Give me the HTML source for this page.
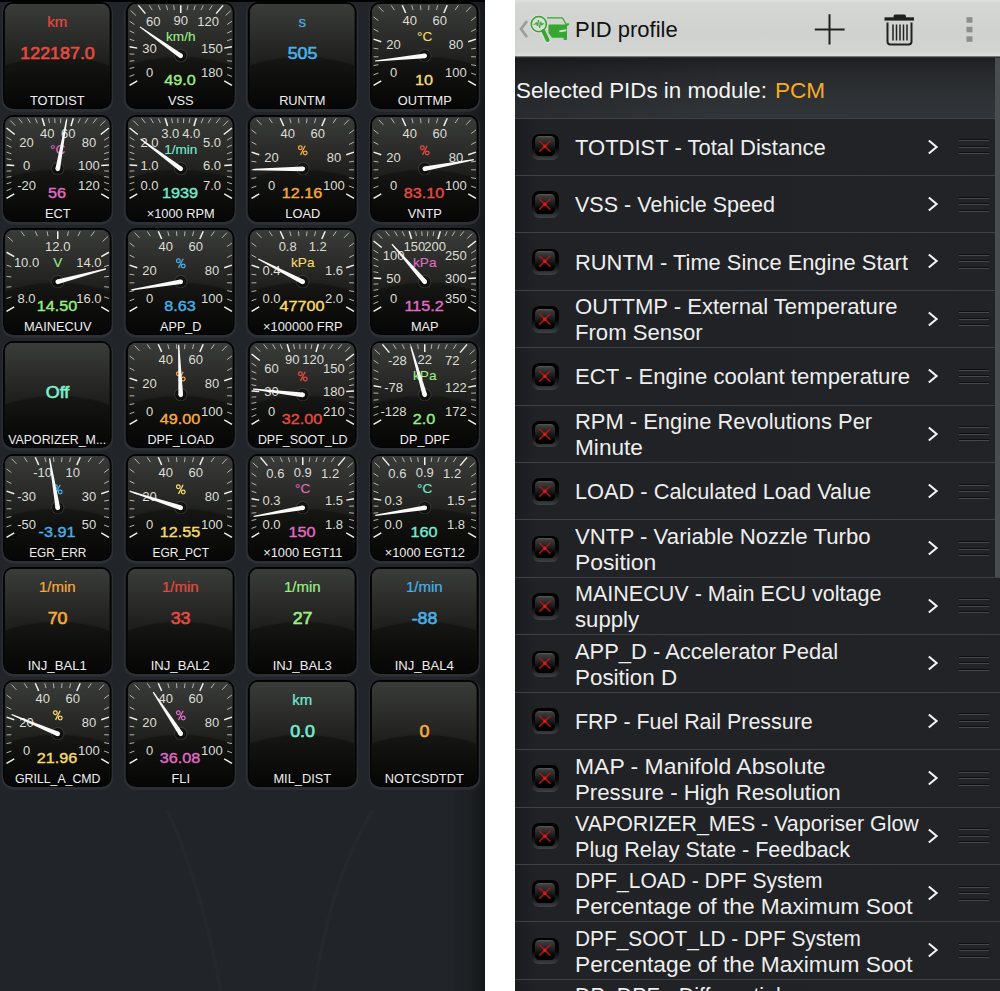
<!DOCTYPE html><html><head><meta charset="utf-8"><style>
*{margin:0;padding:0;box-sizing:border-box}
html,body{width:1000px;height:991px;overflow:hidden;background:#fff;font-family:"Liberation Sans",sans-serif}
#L{position:absolute;left:0;top:0;width:485px;height:991px;background:#212428;overflow:hidden}
#L .topbar{position:absolute;left:0;top:0;width:485px;height:1.5px;background:#000}
#L .rstrip{position:absolute;left:452px;top:0;width:33px;height:991px;background:linear-gradient(90deg,rgba(0,0,0,0) 0,rgba(0,0,0,0.1) 45%,rgba(0,0,0,0.28) 85%,rgba(0,0,0,0.4) 100%)}
#L .wm{position:absolute;left:0;top:790px}
.bx{position:absolute;width:108.5px;height:107px}
.bx svg{display:block;overflow:visible;font-family:"Liberation Sans",sans-serif}
.bx::before{content:"";position:absolute;left:-0.5px;top:-0.5px;right:-0.5px;bottom:-0.5px;border-radius:10.5px;box-shadow:0 1.5px 0 1.2px #2c3035}
#R{position:absolute;left:515px;top:0;width:485px;height:991px;background:#1f2124;overflow:hidden}
#hdr{position:absolute;left:0;top:0;width:485px;height:58px;background:linear-gradient(#dfe1de 0,#d5d7d4 6%,#d0d2cf 55%,#d2d4d1 88%,#dcdedb 96.8%,#55575a 97.6%,#2e3033 99%,#222427 100%)}
#hdr .ttl{position:absolute;left:60px;top:17.3px;font-size:22px;color:#111;line-height:26px}
#sel{position:absolute;left:0;top:58px;width:485px;height:60px;background:linear-gradient(90deg,rgba(0,0,0,0.18),rgba(0,0,0,0) 45%),linear-gradient(#1d1f22 0,#27292c 25%,#2f3235 70%,#323539 100%)}
#sel .st{position:absolute;left:0.5px;top:19.6px;font-size:22px;color:#f4f4f4;line-height:26px;white-space:nowrap}
#sel .pcm{color:#f8ab27}
.row{position:absolute;left:0;width:485px;height:57.42px;border-top:1px solid #3f4245;background:linear-gradient(90deg,#1a1c1f 0,#202225 22px,#212326 100%)}
.cb{position:absolute;left:16.5px;top:15.3px;width:27.5px;height:26.5px;border-radius:7px;background:linear-gradient(#000 0,#050505 50%,#222427 78%,#3e4145 100%)}
.cbi{position:absolute;left:3.5px;top:2.7px;width:20px;height:20px;border-radius:4.5px;background:linear-gradient(#5c5c5c 0,#3c3c3c 9%,#1c1c1c 50%,#020202 78%,#000 100%)}
.cbi svg{position:absolute;left:0;top:0}
.t1{position:absolute;left:60px;top:16.2px;font-size:22px;line-height:26px;color:#eeeeee;white-space:nowrap}
.t2{position:absolute;left:60px;top:3.5px;font-size:22px;line-height:26px;color:#eeeeee;white-space:nowrap}
.chev{position:absolute;left:412px;top:20px}
.drag{position:absolute;left:444px;top:20.6px;width:30px;height:16px}
.drag i{position:absolute;left:0;width:30px;height:2px;border-top:1px solid #0e0f10;border-bottom:1px solid #45484b}
.ln{display:inline-block;transform-origin:0 0}
#scr{position:absolute;left:480px;top:58px;width:5px;height:519px;background:#4a4d50}
</style></head><body>
<div id="L"><div class="topbar"></div><div class="rstrip"></div><svg class="wm" width="485" height="201" viewBox="0 0 485 201"><path d="M167 20Q200 90 221 201M373 20Q330 90 314 201" stroke="rgba(255,255,255,0.014)" stroke-width="4" fill="none"/></svg>
<svg width="0" height="0" style="position:absolute"><defs>
<linearGradient id="gbg" x1="0" y1="0" x2="0" y2="1"><stop offset="0" stop-color="#3a3c39"/><stop offset="0.3" stop-color="#2c2d2b"/><stop offset="0.55" stop-color="#1f201e"/><stop offset="1" stop-color="#141513"/></linearGradient>
<linearGradient id="gbot" x1="0" y1="0" x2="0" y2="1"><stop offset="0" stop-color="#161715"/><stop offset="0.35" stop-color="#0d0d0c"/><stop offset="0.7" stop-color="#050505"/><stop offset="1" stop-color="#020202"/></linearGradient>
<radialGradient id="hub" cx="0.5" cy="0.5" r="0.5"><stop offset="0" stop-color="#000"/><stop offset="0.6" stop-color="#0a0a0a"/><stop offset="1" stop-color="#222" stop-opacity="0"/></radialGradient>
<filter id="hblur" x="-10%" y="-10%" width="120%" height="120%"><feGaussianBlur stdDeviation="1.2"/></filter><clipPath id="gclip"><rect x="1.7" y="1.7" width="105.10" height="103.60" rx="8.5"/></clipPath>
</defs></svg><div class="bx" style="left:3.40px;top:1.50px"><svg width="108.50" height="107.00" viewBox="0 0 108.50 107.00"><rect x="0" y="0" width="108.50" height="107.00" rx="10" fill="#030303"/><g clip-path="url(#gclip)"><rect x="1.7" y="1.7" width="105.10" height="103.60" fill="url(#gbg)"/><ellipse cx="54.25" cy="93.00" rx="83" ry="39" fill="#1a1b19" opacity="0.5"/><ellipse cx="54.25" cy="93.00" rx="82" ry="38" fill="url(#gbot)"/></g><text x="54.25" y="24.9" font-size="15" fill="#e84a40" stroke="#e84a40" stroke-width="0.2" text-anchor="middle">km</text><text transform="translate(54.55 57.4) scale(1.05 1)" font-size="17" fill="#e84a40" stroke="#e84a40" stroke-width="0.6" text-anchor="middle">122187.0</text><text x="54.25" y="103" font-size="13" fill="#eee" text-anchor="middle" textLength="54.53" lengthAdjust="spacingAndGlyphs">TOTDIST</text></svg></div><div class="bx" style="left:125.60px;top:1.50px"><svg width="108.50" height="107.00" viewBox="0 0 108.50 107.00"><rect x="0" y="0" width="108.50" height="107.00" rx="10" fill="#030303"/><g clip-path="url(#gclip)"><rect x="1.7" y="1.7" width="105.10" height="103.60" fill="url(#gbg)"/><ellipse cx="54.25" cy="93.00" rx="83" ry="39" fill="#1a1b19" opacity="0.5"/><ellipse cx="54.25" cy="93.00" rx="82" ry="38" fill="url(#gbot)"/></g><line x1="3.55" y1="83.36" x2="11.25" y2="78.91" stroke="#f2f2f2" stroke-width="1.5"/><line x1="3.55" y1="74.49" x2="8.35" y2="72.55" stroke="#b4b4b4" stroke-width="1.0"/><line x1="3.55" y1="66.57" x2="8.35" y2="65.37" stroke="#b4b4b4" stroke-width="1.0"/><line x1="3.55" y1="59.18" x2="8.35" y2="58.68" stroke="#b4b4b4" stroke-width="1.0"/><line x1="3.55" y1="52.01" x2="8.35" y2="52.18" stroke="#b4b4b4" stroke-width="1.0"/><line x1="3.55" y1="44.77" x2="11.25" y2="46.13" stroke="#f2f2f2" stroke-width="1.5"/><line x1="3.55" y1="37.16" x2="8.35" y2="38.72" stroke="#b4b4b4" stroke-width="1.0"/><line x1="3.55" y1="28.83" x2="8.35" y2="31.17" stroke="#b4b4b4" stroke-width="1.0"/><line x1="3.55" y1="19.27" x2="8.35" y2="22.50" stroke="#b4b4b4" stroke-width="1.0"/><line x1="4.67" y1="8.71" x2="9.92" y2="13.44" stroke="#b4b4b4" stroke-width="1.0"/><line x1="12.43" y1="3.36" x2="19.38" y2="11.64" stroke="#f2f2f2" stroke-width="1.5"/><line x1="23.19" y1="3.30" x2="26.19" y2="8.10" stroke="#b4b4b4" stroke-width="1.0"/><line x1="32.27" y1="3.30" x2="34.40" y2="8.10" stroke="#b4b4b4" stroke-width="1.0"/><line x1="40.27" y1="3.30" x2="41.65" y2="8.10" stroke="#b4b4b4" stroke-width="1.0"/><line x1="47.65" y1="3.30" x2="48.33" y2="8.10" stroke="#b4b4b4" stroke-width="1.0"/><line x1="54.75" y1="3.30" x2="54.75" y2="11.00" stroke="#f2f2f2" stroke-width="1.5"/><line x1="61.85" y1="3.30" x2="61.17" y2="8.10" stroke="#b4b4b4" stroke-width="1.0"/><line x1="69.23" y1="3.30" x2="67.85" y2="8.10" stroke="#b4b4b4" stroke-width="1.0"/><line x1="77.23" y1="3.30" x2="75.10" y2="8.10" stroke="#b4b4b4" stroke-width="1.0"/><line x1="86.31" y1="3.30" x2="83.31" y2="8.10" stroke="#b4b4b4" stroke-width="1.0"/><line x1="97.07" y1="3.36" x2="90.12" y2="11.64" stroke="#f2f2f2" stroke-width="1.5"/><line x1="104.83" y1="8.71" x2="99.58" y2="13.44" stroke="#b4b4b4" stroke-width="1.0"/><line x1="105.95" y1="19.27" x2="101.15" y2="22.50" stroke="#b4b4b4" stroke-width="1.0"/><line x1="105.95" y1="28.83" x2="101.15" y2="31.17" stroke="#b4b4b4" stroke-width="1.0"/><line x1="105.95" y1="37.16" x2="101.15" y2="38.72" stroke="#b4b4b4" stroke-width="1.0"/><line x1="105.95" y1="44.77" x2="98.25" y2="46.13" stroke="#f2f2f2" stroke-width="1.5"/><line x1="105.95" y1="52.01" x2="101.15" y2="52.18" stroke="#b4b4b4" stroke-width="1.0"/><line x1="105.95" y1="59.18" x2="101.15" y2="58.68" stroke="#b4b4b4" stroke-width="1.0"/><line x1="105.95" y1="66.57" x2="101.15" y2="65.37" stroke="#b4b4b4" stroke-width="1.0"/><line x1="105.95" y1="74.49" x2="101.15" y2="72.55" stroke="#b4b4b4" stroke-width="1.0"/><line x1="105.95" y1="83.36" x2="98.25" y2="78.91" stroke="#f2f2f2" stroke-width="1.5"/><text x="23.55" y="74.86" font-size="13" fill="#deded6" text-anchor="middle">0</text><text x="23.55" y="51.35" font-size="13" fill="#deded6" text-anchor="middle">30</text><text x="27.35" y="24.19" font-size="13" fill="#deded6" text-anchor="middle">60</text><text x="54.75" y="23.00" font-size="13" fill="#deded6" text-anchor="middle">90</text><text x="82.15" y="24.19" font-size="13" fill="#deded6" text-anchor="middle">120</text><text x="85.95" y="51.35" font-size="13" fill="#deded6" text-anchor="middle">150</text><text x="85.95" y="74.86" font-size="13" fill="#deded6" text-anchor="middle">180</text><text x="54.75" y="39.4" font-size="13.6" fill="#9cee84" stroke="#9cee84" stroke-width="0.1" text-anchor="middle">km/h</text><text transform="translate(54.05 83.4) scale(1.08 1)" font-size="15" fill="#9cee84" stroke="#9cee84" stroke-width="0.38" text-anchor="middle">49.0</text><text x="54.75" y="103" font-size="13" fill="#eee" text-anchor="middle" textLength="25.63" lengthAdjust="spacingAndGlyphs">VSS</text><circle cx="54.75" cy="53.40" r="6.7" fill="#363736"/><circle cx="54.75" cy="53.80" r="5.7" fill="#0c0c0c"/><circle cx="54.75" cy="53.60" r="4.4" fill="#1e1f1e"/><circle cx="54.75" cy="54.10" r="3.5" fill="#070707"/><polygon points="56.11,51.88 14.31,24.39 13.61,25.37 53.39,55.72" fill="#fafafa"/><circle cx="54.75" cy="53.80" r="2.35" fill="#fafafa"/></svg></div><div class="bx" style="left:247.80px;top:1.50px"><svg width="108.50" height="107.00" viewBox="0 0 108.50 107.00"><rect x="0" y="0" width="108.50" height="107.00" rx="10" fill="#030303"/><g clip-path="url(#gclip)"><rect x="1.7" y="1.7" width="105.10" height="103.60" fill="url(#gbg)"/><ellipse cx="54.25" cy="93.00" rx="83" ry="39" fill="#1a1b19" opacity="0.5"/><ellipse cx="54.25" cy="93.00" rx="82" ry="38" fill="url(#gbot)"/></g><text x="54.25" y="24.9" font-size="15" fill="#4ab0e8" stroke="#4ab0e8" stroke-width="0.2" text-anchor="middle">s</text><text transform="translate(54.55 57.4) scale(1.05 1)" font-size="17" fill="#4ab0e8" stroke="#4ab0e8" stroke-width="0.6" text-anchor="middle">505</text><text x="54.25" y="103" font-size="13" fill="#eee" text-anchor="middle" textLength="46.23" lengthAdjust="spacingAndGlyphs">RUNTM</text></svg></div><div class="bx" style="left:370.00px;top:1.50px"><svg width="108.50" height="107.00" viewBox="0 0 108.50 107.00"><rect x="0" y="0" width="108.50" height="107.00" rx="10" fill="#030303"/><g clip-path="url(#gclip)"><rect x="1.7" y="1.7" width="105.10" height="103.60" fill="url(#gbg)"/><ellipse cx="54.25" cy="93.00" rx="83" ry="39" fill="#1a1b19" opacity="0.5"/><ellipse cx="54.25" cy="93.00" rx="82" ry="38" fill="url(#gbot)"/></g><line x1="3.55" y1="83.36" x2="11.25" y2="78.91" stroke="#f2f2f2" stroke-width="1.5"/><line x1="3.55" y1="72.84" x2="8.35" y2="71.06" stroke="#b4b4b4" stroke-width="1.0"/><line x1="3.55" y1="63.57" x2="8.35" y2="62.65" stroke="#b4b4b4" stroke-width="1.0"/><line x1="3.55" y1="54.87" x2="8.35" y2="54.77" stroke="#b4b4b4" stroke-width="1.0"/><line x1="3.55" y1="46.24" x2="8.35" y2="46.95" stroke="#b4b4b4" stroke-width="1.0"/><line x1="3.55" y1="37.16" x2="11.25" y2="39.67" stroke="#f2f2f2" stroke-width="1.5"/><line x1="3.55" y1="27.03" x2="8.35" y2="29.54" stroke="#b4b4b4" stroke-width="1.0"/><line x1="3.55" y1="14.94" x2="8.36" y2="18.59" stroke="#b4b4b4" stroke-width="1.0"/><line x1="8.57" y1="4.63" x2="13.45" y2="9.82" stroke="#b4b4b4" stroke-width="1.0"/><line x1="21.20" y1="3.30" x2="24.39" y2="8.10" stroke="#b4b4b4" stroke-width="1.0"/><line x1="32.27" y1="3.30" x2="35.69" y2="11.00" stroke="#f2f2f2" stroke-width="1.5"/><line x1="41.78" y1="3.30" x2="43.02" y2="8.10" stroke="#b4b4b4" stroke-width="1.0"/><line x1="50.51" y1="3.30" x2="50.91" y2="8.10" stroke="#b4b4b4" stroke-width="1.0"/><line x1="58.99" y1="3.30" x2="58.59" y2="8.10" stroke="#b4b4b4" stroke-width="1.0"/><line x1="67.72" y1="3.30" x2="66.48" y2="8.10" stroke="#b4b4b4" stroke-width="1.0"/><line x1="77.23" y1="3.30" x2="73.81" y2="11.00" stroke="#f2f2f2" stroke-width="1.5"/><line x1="88.30" y1="3.30" x2="85.11" y2="8.10" stroke="#b4b4b4" stroke-width="1.0"/><line x1="100.93" y1="4.63" x2="96.05" y2="9.82" stroke="#b4b4b4" stroke-width="1.0"/><line x1="105.95" y1="14.94" x2="101.14" y2="18.59" stroke="#b4b4b4" stroke-width="1.0"/><line x1="105.95" y1="27.03" x2="101.15" y2="29.54" stroke="#b4b4b4" stroke-width="1.0"/><line x1="105.95" y1="37.16" x2="98.25" y2="39.67" stroke="#f2f2f2" stroke-width="1.5"/><line x1="105.95" y1="46.24" x2="101.15" y2="46.95" stroke="#b4b4b4" stroke-width="1.0"/><line x1="105.95" y1="54.87" x2="101.15" y2="54.77" stroke="#b4b4b4" stroke-width="1.0"/><line x1="105.95" y1="63.57" x2="101.15" y2="62.65" stroke="#b4b4b4" stroke-width="1.0"/><line x1="105.95" y1="72.84" x2="101.15" y2="71.06" stroke="#b4b4b4" stroke-width="1.0"/><line x1="105.95" y1="83.36" x2="98.25" y2="78.91" stroke="#f2f2f2" stroke-width="1.5"/><text x="23.55" y="74.86" font-size="13" fill="#deded6" text-anchor="middle">0</text><text x="23.55" y="46.71" font-size="13" fill="#deded6" text-anchor="middle">20</text><text x="39.68" y="23.00" font-size="13" fill="#deded6" text-anchor="middle">40</text><text x="69.82" y="23.00" font-size="13" fill="#deded6" text-anchor="middle">60</text><text x="85.95" y="46.71" font-size="13" fill="#deded6" text-anchor="middle">80</text><text x="85.95" y="74.86" font-size="13" fill="#deded6" text-anchor="middle">100</text><text x="54.75" y="39.4" font-size="13.6" fill="#f8dc6c" stroke="#f8dc6c" stroke-width="0.1" text-anchor="middle">°C</text><text transform="translate(54.05 83.4) scale(1.08 1)" font-size="15" fill="#f8dc6c" stroke="#f8dc6c" stroke-width="0.38" text-anchor="middle">10</text><text x="54.75" y="103" font-size="13" fill="#eee" text-anchor="middle" textLength="54.05" lengthAdjust="spacingAndGlyphs">OUTTMP</text><circle cx="54.75" cy="53.40" r="6.7" fill="#363736"/><circle cx="54.75" cy="53.80" r="5.7" fill="#0c0c0c"/><circle cx="54.75" cy="53.60" r="4.4" fill="#1e1f1e"/><circle cx="54.75" cy="54.10" r="3.5" fill="#070707"/><polygon points="54.50,51.46 4.96,58.43 5.09,59.62 55.00,56.14" fill="#fafafa"/><circle cx="54.75" cy="53.80" r="2.35" fill="#fafafa"/></svg></div><div class="bx" style="left:3.40px;top:114.58px"><svg width="108.50" height="107.00" viewBox="0 0 108.50 107.00"><rect x="0" y="0" width="108.50" height="107.00" rx="10" fill="#030303"/><g clip-path="url(#gclip)"><rect x="1.7" y="1.7" width="105.10" height="103.60" fill="url(#gbg)"/><ellipse cx="54.25" cy="93.00" rx="83" ry="39" fill="#1a1b19" opacity="0.5"/><ellipse cx="54.25" cy="93.00" rx="82" ry="38" fill="url(#gbot)"/></g><line x1="3.55" y1="83.36" x2="11.25" y2="78.91" stroke="#f2f2f2" stroke-width="1.5"/><line x1="3.55" y1="75.68" x2="8.35" y2="73.63" stroke="#b4b4b4" stroke-width="1.0"/><line x1="3.55" y1="68.76" x2="8.35" y2="67.36" stroke="#b4b4b4" stroke-width="1.0"/><line x1="3.55" y1="62.30" x2="8.35" y2="61.51" stroke="#b4b4b4" stroke-width="1.0"/><line x1="3.55" y1="56.10" x2="8.35" y2="55.88" stroke="#b4b4b4" stroke-width="1.0"/><line x1="3.55" y1="49.96" x2="11.25" y2="50.54" stroke="#f2f2f2" stroke-width="1.5"/><line x1="3.55" y1="43.72" x2="8.35" y2="44.66" stroke="#b4b4b4" stroke-width="1.0"/><line x1="3.55" y1="37.16" x2="8.35" y2="38.72" stroke="#b4b4b4" stroke-width="1.0"/><line x1="3.55" y1="30.08" x2="8.35" y2="32.30" stroke="#b4b4b4" stroke-width="1.0"/><line x1="3.55" y1="22.16" x2="8.35" y2="25.13" stroke="#b4b4b4" stroke-width="1.0"/><line x1="3.56" y1="12.97" x2="11.77" y2="19.52" stroke="#f2f2f2" stroke-width="1.5"/><line x1="7.22" y1="5.56" x2="12.27" y2="10.68" stroke="#b4b4b4" stroke-width="1.0"/><line x1="15.70" y1="3.30" x2="19.41" y2="8.10" stroke="#b4b4b4" stroke-width="1.0"/><line x1="24.58" y1="3.30" x2="27.45" y2="8.10" stroke="#b4b4b4" stroke-width="1.0"/><line x1="32.27" y1="3.30" x2="34.40" y2="8.10" stroke="#b4b4b4" stroke-width="1.0"/><line x1="39.17" y1="3.30" x2="41.55" y2="11.00" stroke="#f2f2f2" stroke-width="1.5"/><line x1="45.59" y1="3.30" x2="46.46" y2="8.10" stroke="#b4b4b4" stroke-width="1.0"/><line x1="51.72" y1="3.30" x2="52.01" y2="8.10" stroke="#b4b4b4" stroke-width="1.0"/><line x1="57.78" y1="3.30" x2="57.49" y2="8.10" stroke="#b4b4b4" stroke-width="1.0"/><line x1="63.91" y1="3.30" x2="63.04" y2="8.10" stroke="#b4b4b4" stroke-width="1.0"/><line x1="70.33" y1="3.30" x2="67.95" y2="11.00" stroke="#f2f2f2" stroke-width="1.5"/><line x1="77.23" y1="3.30" x2="75.10" y2="8.10" stroke="#b4b4b4" stroke-width="1.0"/><line x1="84.92" y1="3.30" x2="82.05" y2="8.10" stroke="#b4b4b4" stroke-width="1.0"/><line x1="93.80" y1="3.30" x2="90.09" y2="8.10" stroke="#b4b4b4" stroke-width="1.0"/><line x1="102.28" y1="5.56" x2="97.23" y2="10.68" stroke="#b4b4b4" stroke-width="1.0"/><line x1="105.94" y1="12.97" x2="97.73" y2="19.52" stroke="#f2f2f2" stroke-width="1.5"/><line x1="105.95" y1="22.16" x2="101.15" y2="25.13" stroke="#b4b4b4" stroke-width="1.0"/><line x1="105.95" y1="30.08" x2="101.15" y2="32.30" stroke="#b4b4b4" stroke-width="1.0"/><line x1="105.95" y1="37.16" x2="101.15" y2="38.72" stroke="#b4b4b4" stroke-width="1.0"/><line x1="105.95" y1="43.72" x2="101.15" y2="44.66" stroke="#b4b4b4" stroke-width="1.0"/><line x1="105.95" y1="49.96" x2="98.25" y2="50.54" stroke="#f2f2f2" stroke-width="1.5"/><line x1="105.95" y1="56.10" x2="101.15" y2="55.88" stroke="#b4b4b4" stroke-width="1.0"/><line x1="105.95" y1="62.30" x2="101.15" y2="61.51" stroke="#b4b4b4" stroke-width="1.0"/><line x1="105.95" y1="68.76" x2="101.15" y2="67.36" stroke="#b4b4b4" stroke-width="1.0"/><line x1="105.95" y1="75.68" x2="101.15" y2="73.63" stroke="#b4b4b4" stroke-width="1.0"/><line x1="105.95" y1="83.36" x2="98.25" y2="78.91" stroke="#f2f2f2" stroke-width="1.5"/><text x="23.55" y="74.86" font-size="13" fill="#deded6" text-anchor="middle">-20</text><text x="23.55" y="54.51" font-size="13" fill="#deded6" text-anchor="middle">0</text><text x="23.55" y="31.97" font-size="13" fill="#deded6" text-anchor="middle">20</text><text x="44.31" y="23.00" font-size="13" fill="#deded6" text-anchor="middle">40</text><text x="65.19" y="23.00" font-size="13" fill="#deded6" text-anchor="middle">60</text><text x="85.95" y="31.97" font-size="13" fill="#deded6" text-anchor="middle">80</text><text x="85.95" y="54.51" font-size="13" fill="#deded6" text-anchor="middle">100</text><text x="85.95" y="74.86" font-size="13" fill="#deded6" text-anchor="middle">120</text><text x="54.75" y="39.4" font-size="13.6" fill="#e06cc4" stroke="#e06cc4" stroke-width="0.1" text-anchor="middle">°C</text><text transform="translate(54.05 83.4) scale(1.08 1)" font-size="15" fill="#e06cc4" stroke="#e06cc4" stroke-width="0.38" text-anchor="middle">56</text><text x="54.75" y="103" font-size="13" fill="#eee" text-anchor="middle" textLength="25.61" lengthAdjust="spacingAndGlyphs">ECT</text><circle cx="54.75" cy="53.40" r="6.7" fill="#363736"/><circle cx="54.75" cy="53.80" r="5.7" fill="#0c0c0c"/><circle cx="54.75" cy="53.60" r="4.4" fill="#1e1f1e"/><circle cx="54.75" cy="54.10" r="3.5" fill="#070707"/><polygon points="57.06,54.22 64.27,4.71 63.09,4.50 52.44,53.38" fill="#fafafa"/><circle cx="54.75" cy="53.80" r="2.35" fill="#fafafa"/></svg></div><div class="bx" style="left:125.60px;top:114.58px"><svg width="108.50" height="107.00" viewBox="0 0 108.50 107.00"><rect x="0" y="0" width="108.50" height="107.00" rx="10" fill="#030303"/><g clip-path="url(#gclip)"><rect x="1.7" y="1.7" width="105.10" height="103.60" fill="url(#gbg)"/><ellipse cx="54.25" cy="93.00" rx="83" ry="39" fill="#1a1b19" opacity="0.5"/><ellipse cx="54.25" cy="93.00" rx="82" ry="38" fill="url(#gbot)"/></g><line x1="3.55" y1="83.36" x2="11.25" y2="78.91" stroke="#f2f2f2" stroke-width="1.5"/><line x1="3.55" y1="75.68" x2="8.35" y2="73.63" stroke="#b4b4b4" stroke-width="1.0"/><line x1="3.55" y1="68.76" x2="8.35" y2="67.36" stroke="#b4b4b4" stroke-width="1.0"/><line x1="3.55" y1="62.30" x2="8.35" y2="61.51" stroke="#b4b4b4" stroke-width="1.0"/><line x1="3.55" y1="56.10" x2="8.35" y2="55.88" stroke="#b4b4b4" stroke-width="1.0"/><line x1="3.55" y1="49.96" x2="11.25" y2="50.54" stroke="#f2f2f2" stroke-width="1.5"/><line x1="3.55" y1="43.72" x2="8.35" y2="44.66" stroke="#b4b4b4" stroke-width="1.0"/><line x1="3.55" y1="37.16" x2="8.35" y2="38.72" stroke="#b4b4b4" stroke-width="1.0"/><line x1="3.55" y1="30.08" x2="8.35" y2="32.30" stroke="#b4b4b4" stroke-width="1.0"/><line x1="3.55" y1="22.16" x2="8.35" y2="25.13" stroke="#b4b4b4" stroke-width="1.0"/><line x1="3.56" y1="12.97" x2="11.77" y2="19.52" stroke="#f2f2f2" stroke-width="1.5"/><line x1="7.22" y1="5.56" x2="12.27" y2="10.68" stroke="#b4b4b4" stroke-width="1.0"/><line x1="15.70" y1="3.30" x2="19.41" y2="8.10" stroke="#b4b4b4" stroke-width="1.0"/><line x1="24.58" y1="3.30" x2="27.45" y2="8.10" stroke="#b4b4b4" stroke-width="1.0"/><line x1="32.27" y1="3.30" x2="34.40" y2="8.10" stroke="#b4b4b4" stroke-width="1.0"/><line x1="39.17" y1="3.30" x2="41.55" y2="11.00" stroke="#f2f2f2" stroke-width="1.5"/><line x1="45.59" y1="3.30" x2="46.46" y2="8.10" stroke="#b4b4b4" stroke-width="1.0"/><line x1="51.72" y1="3.30" x2="52.01" y2="8.10" stroke="#b4b4b4" stroke-width="1.0"/><line x1="57.78" y1="3.30" x2="57.49" y2="8.10" stroke="#b4b4b4" stroke-width="1.0"/><line x1="63.91" y1="3.30" x2="63.04" y2="8.10" stroke="#b4b4b4" stroke-width="1.0"/><line x1="70.33" y1="3.30" x2="67.95" y2="11.00" stroke="#f2f2f2" stroke-width="1.5"/><line x1="77.23" y1="3.30" x2="75.10" y2="8.10" stroke="#b4b4b4" stroke-width="1.0"/><line x1="84.92" y1="3.30" x2="82.05" y2="8.10" stroke="#b4b4b4" stroke-width="1.0"/><line x1="93.80" y1="3.30" x2="90.09" y2="8.10" stroke="#b4b4b4" stroke-width="1.0"/><line x1="102.28" y1="5.56" x2="97.23" y2="10.68" stroke="#b4b4b4" stroke-width="1.0"/><line x1="105.94" y1="12.97" x2="97.73" y2="19.52" stroke="#f2f2f2" stroke-width="1.5"/><line x1="105.95" y1="22.16" x2="101.15" y2="25.13" stroke="#b4b4b4" stroke-width="1.0"/><line x1="105.95" y1="30.08" x2="101.15" y2="32.30" stroke="#b4b4b4" stroke-width="1.0"/><line x1="105.95" y1="37.16" x2="101.15" y2="38.72" stroke="#b4b4b4" stroke-width="1.0"/><line x1="105.95" y1="43.72" x2="101.15" y2="44.66" stroke="#b4b4b4" stroke-width="1.0"/><line x1="105.95" y1="49.96" x2="98.25" y2="50.54" stroke="#f2f2f2" stroke-width="1.5"/><line x1="105.95" y1="56.10" x2="101.15" y2="55.88" stroke="#b4b4b4" stroke-width="1.0"/><line x1="105.95" y1="62.30" x2="101.15" y2="61.51" stroke="#b4b4b4" stroke-width="1.0"/><line x1="105.95" y1="68.76" x2="101.15" y2="67.36" stroke="#b4b4b4" stroke-width="1.0"/><line x1="105.95" y1="75.68" x2="101.15" y2="73.63" stroke="#b4b4b4" stroke-width="1.0"/><line x1="105.95" y1="83.36" x2="98.25" y2="78.91" stroke="#f2f2f2" stroke-width="1.5"/><text x="23.55" y="74.86" font-size="13" fill="#deded6" text-anchor="middle">0.0</text><text x="23.55" y="54.51" font-size="13" fill="#deded6" text-anchor="middle">1.0</text><text x="23.55" y="31.97" font-size="13" fill="#deded6" text-anchor="middle">2.0</text><text x="44.31" y="23.00" font-size="13" fill="#deded6" text-anchor="middle">3.0</text><text x="65.19" y="23.00" font-size="13" fill="#deded6" text-anchor="middle">4.0</text><text x="85.95" y="31.97" font-size="13" fill="#deded6" text-anchor="middle">5.0</text><text x="85.95" y="54.51" font-size="13" fill="#deded6" text-anchor="middle">6.0</text><text x="85.95" y="74.86" font-size="13" fill="#deded6" text-anchor="middle">7.0</text><text x="54.75" y="39.4" font-size="13.6" fill="#74ecd0" stroke="#74ecd0" stroke-width="0.1" text-anchor="middle">1/min</text><text transform="translate(54.05 83.4) scale(1.08 1)" font-size="15" fill="#74ecd0" stroke="#74ecd0" stroke-width="0.38" text-anchor="middle">1939</text><text x="54.75" y="103" font-size="13" fill="#eee" text-anchor="middle" textLength="68.00" lengthAdjust="spacingAndGlyphs">×1000 RPM</text><circle cx="54.75" cy="53.40" r="6.7" fill="#363736"/><circle cx="54.75" cy="53.80" r="5.7" fill="#0c0c0c"/><circle cx="54.75" cy="53.60" r="4.4" fill="#1e1f1e"/><circle cx="54.75" cy="54.10" r="3.5" fill="#070707"/><polygon points="56.15,51.91 14.90,23.59 14.19,24.56 53.35,55.69" fill="#fafafa"/><circle cx="54.75" cy="53.80" r="2.35" fill="#fafafa"/></svg></div><div class="bx" style="left:247.80px;top:114.58px"><svg width="108.50" height="107.00" viewBox="0 0 108.50 107.00"><rect x="0" y="0" width="108.50" height="107.00" rx="10" fill="#030303"/><g clip-path="url(#gclip)"><rect x="1.7" y="1.7" width="105.10" height="103.60" fill="url(#gbg)"/><ellipse cx="54.25" cy="93.00" rx="83" ry="39" fill="#1a1b19" opacity="0.5"/><ellipse cx="54.25" cy="93.00" rx="82" ry="38" fill="url(#gbot)"/></g><line x1="3.55" y1="83.36" x2="11.25" y2="78.91" stroke="#f2f2f2" stroke-width="1.5"/><line x1="3.55" y1="72.84" x2="8.35" y2="71.06" stroke="#b4b4b4" stroke-width="1.0"/><line x1="3.55" y1="63.57" x2="8.35" y2="62.65" stroke="#b4b4b4" stroke-width="1.0"/><line x1="3.55" y1="54.87" x2="8.35" y2="54.77" stroke="#b4b4b4" stroke-width="1.0"/><line x1="3.55" y1="46.24" x2="8.35" y2="46.95" stroke="#b4b4b4" stroke-width="1.0"/><line x1="3.55" y1="37.16" x2="11.25" y2="39.67" stroke="#f2f2f2" stroke-width="1.5"/><line x1="3.55" y1="27.03" x2="8.35" y2="29.54" stroke="#b4b4b4" stroke-width="1.0"/><line x1="3.55" y1="14.94" x2="8.36" y2="18.59" stroke="#b4b4b4" stroke-width="1.0"/><line x1="8.57" y1="4.63" x2="13.45" y2="9.82" stroke="#b4b4b4" stroke-width="1.0"/><line x1="21.20" y1="3.30" x2="24.39" y2="8.10" stroke="#b4b4b4" stroke-width="1.0"/><line x1="32.27" y1="3.30" x2="35.69" y2="11.00" stroke="#f2f2f2" stroke-width="1.5"/><line x1="41.78" y1="3.30" x2="43.02" y2="8.10" stroke="#b4b4b4" stroke-width="1.0"/><line x1="50.51" y1="3.30" x2="50.91" y2="8.10" stroke="#b4b4b4" stroke-width="1.0"/><line x1="58.99" y1="3.30" x2="58.59" y2="8.10" stroke="#b4b4b4" stroke-width="1.0"/><line x1="67.72" y1="3.30" x2="66.48" y2="8.10" stroke="#b4b4b4" stroke-width="1.0"/><line x1="77.23" y1="3.30" x2="73.81" y2="11.00" stroke="#f2f2f2" stroke-width="1.5"/><line x1="88.30" y1="3.30" x2="85.11" y2="8.10" stroke="#b4b4b4" stroke-width="1.0"/><line x1="100.93" y1="4.63" x2="96.05" y2="9.82" stroke="#b4b4b4" stroke-width="1.0"/><line x1="105.95" y1="14.94" x2="101.14" y2="18.59" stroke="#b4b4b4" stroke-width="1.0"/><line x1="105.95" y1="27.03" x2="101.15" y2="29.54" stroke="#b4b4b4" stroke-width="1.0"/><line x1="105.95" y1="37.16" x2="98.25" y2="39.67" stroke="#f2f2f2" stroke-width="1.5"/><line x1="105.95" y1="46.24" x2="101.15" y2="46.95" stroke="#b4b4b4" stroke-width="1.0"/><line x1="105.95" y1="54.87" x2="101.15" y2="54.77" stroke="#b4b4b4" stroke-width="1.0"/><line x1="105.95" y1="63.57" x2="101.15" y2="62.65" stroke="#b4b4b4" stroke-width="1.0"/><line x1="105.95" y1="72.84" x2="101.15" y2="71.06" stroke="#b4b4b4" stroke-width="1.0"/><line x1="105.95" y1="83.36" x2="98.25" y2="78.91" stroke="#f2f2f2" stroke-width="1.5"/><text x="23.55" y="74.86" font-size="13" fill="#deded6" text-anchor="middle">0</text><text x="23.55" y="46.71" font-size="13" fill="#deded6" text-anchor="middle">20</text><text x="39.68" y="23.00" font-size="13" fill="#deded6" text-anchor="middle">40</text><text x="69.82" y="23.00" font-size="13" fill="#deded6" text-anchor="middle">60</text><text x="85.95" y="46.71" font-size="13" fill="#deded6" text-anchor="middle">80</text><text x="85.95" y="74.86" font-size="13" fill="#deded6" text-anchor="middle">100</text><g stroke="#f8aa3c" stroke-width="1.25" fill="none"><circle cx="52.35" cy="32.80" r="1.85"/><circle cx="57.25" cy="37.90" r="1.85"/><path d="M57.15 30.70L52.55 39.90"/></g><text transform="translate(54.05 83.4) scale(1.08 1)" font-size="15" fill="#f8aa3c" stroke="#f8aa3c" stroke-width="0.38" text-anchor="middle">12.16</text><text x="54.75" y="103" font-size="13" fill="#eee" text-anchor="middle" textLength="34.88" lengthAdjust="spacingAndGlyphs">LOAD</text><circle cx="54.75" cy="53.40" r="6.7" fill="#363736"/><circle cx="54.75" cy="53.80" r="5.7" fill="#0c0c0c"/><circle cx="54.75" cy="53.60" r="4.4" fill="#1e1f1e"/><circle cx="54.75" cy="54.10" r="3.5" fill="#070707"/><polygon points="54.72,51.45 4.75,53.91 4.76,55.11 54.78,56.15" fill="#fafafa"/><circle cx="54.75" cy="53.80" r="2.35" fill="#fafafa"/></svg></div><div class="bx" style="left:370.00px;top:114.58px"><svg width="108.50" height="107.00" viewBox="0 0 108.50 107.00"><rect x="0" y="0" width="108.50" height="107.00" rx="10" fill="#030303"/><g clip-path="url(#gclip)"><rect x="1.7" y="1.7" width="105.10" height="103.60" fill="url(#gbg)"/><ellipse cx="54.25" cy="93.00" rx="83" ry="39" fill="#1a1b19" opacity="0.5"/><ellipse cx="54.25" cy="93.00" rx="82" ry="38" fill="url(#gbot)"/></g><line x1="3.55" y1="83.36" x2="11.25" y2="78.91" stroke="#f2f2f2" stroke-width="1.5"/><line x1="3.55" y1="72.84" x2="8.35" y2="71.06" stroke="#b4b4b4" stroke-width="1.0"/><line x1="3.55" y1="63.57" x2="8.35" y2="62.65" stroke="#b4b4b4" stroke-width="1.0"/><line x1="3.55" y1="54.87" x2="8.35" y2="54.77" stroke="#b4b4b4" stroke-width="1.0"/><line x1="3.55" y1="46.24" x2="8.35" y2="46.95" stroke="#b4b4b4" stroke-width="1.0"/><line x1="3.55" y1="37.16" x2="11.25" y2="39.67" stroke="#f2f2f2" stroke-width="1.5"/><line x1="3.55" y1="27.03" x2="8.35" y2="29.54" stroke="#b4b4b4" stroke-width="1.0"/><line x1="3.55" y1="14.94" x2="8.36" y2="18.59" stroke="#b4b4b4" stroke-width="1.0"/><line x1="8.57" y1="4.63" x2="13.45" y2="9.82" stroke="#b4b4b4" stroke-width="1.0"/><line x1="21.20" y1="3.30" x2="24.39" y2="8.10" stroke="#b4b4b4" stroke-width="1.0"/><line x1="32.27" y1="3.30" x2="35.69" y2="11.00" stroke="#f2f2f2" stroke-width="1.5"/><line x1="41.78" y1="3.30" x2="43.02" y2="8.10" stroke="#b4b4b4" stroke-width="1.0"/><line x1="50.51" y1="3.30" x2="50.91" y2="8.10" stroke="#b4b4b4" stroke-width="1.0"/><line x1="58.99" y1="3.30" x2="58.59" y2="8.10" stroke="#b4b4b4" stroke-width="1.0"/><line x1="67.72" y1="3.30" x2="66.48" y2="8.10" stroke="#b4b4b4" stroke-width="1.0"/><line x1="77.23" y1="3.30" x2="73.81" y2="11.00" stroke="#f2f2f2" stroke-width="1.5"/><line x1="88.30" y1="3.30" x2="85.11" y2="8.10" stroke="#b4b4b4" stroke-width="1.0"/><line x1="100.93" y1="4.63" x2="96.05" y2="9.82" stroke="#b4b4b4" stroke-width="1.0"/><line x1="105.95" y1="14.94" x2="101.14" y2="18.59" stroke="#b4b4b4" stroke-width="1.0"/><line x1="105.95" y1="27.03" x2="101.15" y2="29.54" stroke="#b4b4b4" stroke-width="1.0"/><line x1="105.95" y1="37.16" x2="98.25" y2="39.67" stroke="#f2f2f2" stroke-width="1.5"/><line x1="105.95" y1="46.24" x2="101.15" y2="46.95" stroke="#b4b4b4" stroke-width="1.0"/><line x1="105.95" y1="54.87" x2="101.15" y2="54.77" stroke="#b4b4b4" stroke-width="1.0"/><line x1="105.95" y1="63.57" x2="101.15" y2="62.65" stroke="#b4b4b4" stroke-width="1.0"/><line x1="105.95" y1="72.84" x2="101.15" y2="71.06" stroke="#b4b4b4" stroke-width="1.0"/><line x1="105.95" y1="83.36" x2="98.25" y2="78.91" stroke="#f2f2f2" stroke-width="1.5"/><text x="23.55" y="74.86" font-size="13" fill="#deded6" text-anchor="middle">0</text><text x="23.55" y="46.71" font-size="13" fill="#deded6" text-anchor="middle">20</text><text x="39.68" y="23.00" font-size="13" fill="#deded6" text-anchor="middle">40</text><text x="69.82" y="23.00" font-size="13" fill="#deded6" text-anchor="middle">60</text><text x="85.95" y="46.71" font-size="13" fill="#deded6" text-anchor="middle">80</text><text x="85.95" y="74.86" font-size="13" fill="#deded6" text-anchor="middle">100</text><g stroke="#e84a40" stroke-width="1.25" fill="none"><circle cx="52.35" cy="32.80" r="1.85"/><circle cx="57.25" cy="37.90" r="1.85"/><path d="M57.15 30.70L52.55 39.90"/></g><text transform="translate(54.05 83.4) scale(1.08 1)" font-size="15" fill="#e84a40" stroke="#e84a40" stroke-width="0.38" text-anchor="middle">83.10</text><text x="54.75" y="103" font-size="13" fill="#eee" text-anchor="middle" textLength="34.15" lengthAdjust="spacingAndGlyphs">VNTP</text><circle cx="54.75" cy="53.40" r="6.7" fill="#363736"/><circle cx="54.75" cy="53.80" r="5.7" fill="#0c0c0c"/><circle cx="54.75" cy="53.60" r="4.4" fill="#1e1f1e"/><circle cx="54.75" cy="54.10" r="3.5" fill="#070707"/><polygon points="55.18,56.11 104.01,45.23 103.79,44.05 54.32,51.49" fill="#fafafa"/><circle cx="54.75" cy="53.80" r="2.35" fill="#fafafa"/></svg></div><div class="bx" style="left:3.40px;top:227.66px"><svg width="108.50" height="107.00" viewBox="0 0 108.50 107.00"><rect x="0" y="0" width="108.50" height="107.00" rx="10" fill="#030303"/><g clip-path="url(#gclip)"><rect x="1.7" y="1.7" width="105.10" height="103.60" fill="url(#gbg)"/><ellipse cx="54.25" cy="93.00" rx="83" ry="39" fill="#1a1b19" opacity="0.5"/><ellipse cx="54.25" cy="93.00" rx="82" ry="38" fill="url(#gbot)"/></g><line x1="3.55" y1="83.36" x2="11.25" y2="78.91" stroke="#f2f2f2" stroke-width="1.5"/><line x1="3.55" y1="70.44" x2="8.35" y2="68.88" stroke="#b4b4b4" stroke-width="1.0"/><line x1="3.55" y1="59.18" x2="8.35" y2="58.68" stroke="#b4b4b4" stroke-width="1.0"/><line x1="3.55" y1="48.42" x2="8.35" y2="48.92" stroke="#b4b4b4" stroke-width="1.0"/><line x1="3.55" y1="37.16" x2="8.35" y2="38.72" stroke="#b4b4b4" stroke-width="1.0"/><line x1="3.55" y1="24.24" x2="11.25" y2="28.69" stroke="#f2f2f2" stroke-width="1.5"/><line x1="4.67" y1="8.71" x2="9.92" y2="13.44" stroke="#b4b4b4" stroke-width="1.0"/><line x1="18.06" y1="3.30" x2="21.55" y2="8.10" stroke="#b4b4b4" stroke-width="1.0"/><line x1="32.27" y1="3.30" x2="34.40" y2="8.10" stroke="#b4b4b4" stroke-width="1.0"/><line x1="44.02" y1="3.30" x2="45.04" y2="8.10" stroke="#b4b4b4" stroke-width="1.0"/><line x1="54.75" y1="3.30" x2="54.75" y2="11.00" stroke="#f2f2f2" stroke-width="1.5"/><line x1="65.48" y1="3.30" x2="64.46" y2="8.10" stroke="#b4b4b4" stroke-width="1.0"/><line x1="77.23" y1="3.30" x2="75.10" y2="8.10" stroke="#b4b4b4" stroke-width="1.0"/><line x1="91.44" y1="3.30" x2="87.95" y2="8.10" stroke="#b4b4b4" stroke-width="1.0"/><line x1="104.83" y1="8.71" x2="99.58" y2="13.44" stroke="#b4b4b4" stroke-width="1.0"/><line x1="105.95" y1="24.24" x2="98.25" y2="28.69" stroke="#f2f2f2" stroke-width="1.5"/><line x1="105.95" y1="37.16" x2="101.15" y2="38.72" stroke="#b4b4b4" stroke-width="1.0"/><line x1="105.95" y1="48.42" x2="101.15" y2="48.92" stroke="#b4b4b4" stroke-width="1.0"/><line x1="105.95" y1="59.18" x2="101.15" y2="58.68" stroke="#b4b4b4" stroke-width="1.0"/><line x1="105.95" y1="70.44" x2="101.15" y2="68.88" stroke="#b4b4b4" stroke-width="1.0"/><line x1="105.95" y1="83.36" x2="98.25" y2="78.91" stroke="#f2f2f2" stroke-width="1.5"/><text x="23.55" y="74.86" font-size="13" fill="#deded6" text-anchor="middle">8.0</text><text x="23.55" y="38.84" font-size="13" fill="#deded6" text-anchor="middle">10.0</text><text x="54.75" y="23.00" font-size="13" fill="#deded6" text-anchor="middle">12.0</text><text x="85.95" y="38.84" font-size="13" fill="#deded6" text-anchor="middle">14.0</text><text x="85.95" y="74.86" font-size="13" fill="#deded6" text-anchor="middle">16.0</text><text x="54.75" y="39.4" font-size="13.6" fill="#9cee84" stroke="#9cee84" stroke-width="0.1" text-anchor="middle">V</text><text transform="translate(54.05 83.4) scale(1.08 1)" font-size="15" fill="#9cee84" stroke="#9cee84" stroke-width="0.38" text-anchor="middle">14.50</text><text x="54.75" y="103" font-size="13" fill="#eee" text-anchor="middle" textLength="67.60" lengthAdjust="spacingAndGlyphs">MAINECUV</text><circle cx="54.75" cy="53.40" r="6.7" fill="#363736"/><circle cx="54.75" cy="53.80" r="5.7" fill="#0c0c0c"/><circle cx="54.75" cy="53.60" r="4.4" fill="#1e1f1e"/><circle cx="54.75" cy="54.10" r="3.5" fill="#070707"/><polygon points="55.36,56.07 103.20,41.44 102.89,40.28 54.14,51.53" fill="#fafafa"/><circle cx="54.75" cy="53.80" r="2.35" fill="#fafafa"/></svg></div><div class="bx" style="left:125.60px;top:227.66px"><svg width="108.50" height="107.00" viewBox="0 0 108.50 107.00"><rect x="0" y="0" width="108.50" height="107.00" rx="10" fill="#030303"/><g clip-path="url(#gclip)"><rect x="1.7" y="1.7" width="105.10" height="103.60" fill="url(#gbg)"/><ellipse cx="54.25" cy="93.00" rx="83" ry="39" fill="#1a1b19" opacity="0.5"/><ellipse cx="54.25" cy="93.00" rx="82" ry="38" fill="url(#gbot)"/></g><line x1="3.55" y1="83.36" x2="11.25" y2="78.91" stroke="#f2f2f2" stroke-width="1.5"/><line x1="3.55" y1="72.84" x2="8.35" y2="71.06" stroke="#b4b4b4" stroke-width="1.0"/><line x1="3.55" y1="63.57" x2="8.35" y2="62.65" stroke="#b4b4b4" stroke-width="1.0"/><line x1="3.55" y1="54.87" x2="8.35" y2="54.77" stroke="#b4b4b4" stroke-width="1.0"/><line x1="3.55" y1="46.24" x2="8.35" y2="46.95" stroke="#b4b4b4" stroke-width="1.0"/><line x1="3.55" y1="37.16" x2="11.25" y2="39.67" stroke="#f2f2f2" stroke-width="1.5"/><line x1="3.55" y1="27.03" x2="8.35" y2="29.54" stroke="#b4b4b4" stroke-width="1.0"/><line x1="3.55" y1="14.94" x2="8.36" y2="18.59" stroke="#b4b4b4" stroke-width="1.0"/><line x1="8.57" y1="4.63" x2="13.45" y2="9.82" stroke="#b4b4b4" stroke-width="1.0"/><line x1="21.20" y1="3.30" x2="24.39" y2="8.10" stroke="#b4b4b4" stroke-width="1.0"/><line x1="32.27" y1="3.30" x2="35.69" y2="11.00" stroke="#f2f2f2" stroke-width="1.5"/><line x1="41.78" y1="3.30" x2="43.02" y2="8.10" stroke="#b4b4b4" stroke-width="1.0"/><line x1="50.51" y1="3.30" x2="50.91" y2="8.10" stroke="#b4b4b4" stroke-width="1.0"/><line x1="58.99" y1="3.30" x2="58.59" y2="8.10" stroke="#b4b4b4" stroke-width="1.0"/><line x1="67.72" y1="3.30" x2="66.48" y2="8.10" stroke="#b4b4b4" stroke-width="1.0"/><line x1="77.23" y1="3.30" x2="73.81" y2="11.00" stroke="#f2f2f2" stroke-width="1.5"/><line x1="88.30" y1="3.30" x2="85.11" y2="8.10" stroke="#b4b4b4" stroke-width="1.0"/><line x1="100.93" y1="4.63" x2="96.05" y2="9.82" stroke="#b4b4b4" stroke-width="1.0"/><line x1="105.95" y1="14.94" x2="101.14" y2="18.59" stroke="#b4b4b4" stroke-width="1.0"/><line x1="105.95" y1="27.03" x2="101.15" y2="29.54" stroke="#b4b4b4" stroke-width="1.0"/><line x1="105.95" y1="37.16" x2="98.25" y2="39.67" stroke="#f2f2f2" stroke-width="1.5"/><line x1="105.95" y1="46.24" x2="101.15" y2="46.95" stroke="#b4b4b4" stroke-width="1.0"/><line x1="105.95" y1="54.87" x2="101.15" y2="54.77" stroke="#b4b4b4" stroke-width="1.0"/><line x1="105.95" y1="63.57" x2="101.15" y2="62.65" stroke="#b4b4b4" stroke-width="1.0"/><line x1="105.95" y1="72.84" x2="101.15" y2="71.06" stroke="#b4b4b4" stroke-width="1.0"/><line x1="105.95" y1="83.36" x2="98.25" y2="78.91" stroke="#f2f2f2" stroke-width="1.5"/><text x="23.55" y="74.86" font-size="13" fill="#deded6" text-anchor="middle">0</text><text x="23.55" y="46.71" font-size="13" fill="#deded6" text-anchor="middle">20</text><text x="39.68" y="23.00" font-size="13" fill="#deded6" text-anchor="middle">40</text><text x="69.82" y="23.00" font-size="13" fill="#deded6" text-anchor="middle">60</text><text x="85.95" y="46.71" font-size="13" fill="#deded6" text-anchor="middle">80</text><text x="85.95" y="74.86" font-size="13" fill="#deded6" text-anchor="middle">100</text><g stroke="#4ab0e8" stroke-width="1.25" fill="none"><circle cx="52.35" cy="32.80" r="1.85"/><circle cx="57.25" cy="37.90" r="1.85"/><path d="M57.15 30.70L52.55 39.90"/></g><text transform="translate(54.05 83.4) scale(1.08 1)" font-size="15" fill="#4ab0e8" stroke="#4ab0e8" stroke-width="0.38" text-anchor="middle">8.63</text><text x="54.75" y="103" font-size="13" fill="#eee" text-anchor="middle" textLength="41.36" lengthAdjust="spacingAndGlyphs">APP_D</text><circle cx="54.75" cy="53.40" r="6.7" fill="#363736"/><circle cx="54.75" cy="53.80" r="5.7" fill="#0c0c0c"/><circle cx="54.75" cy="53.60" r="4.4" fill="#1e1f1e"/><circle cx="54.75" cy="54.10" r="3.5" fill="#070707"/><polygon points="54.37,51.48 5.31,61.28 5.50,62.46 55.13,56.12" fill="#fafafa"/><circle cx="54.75" cy="53.80" r="2.35" fill="#fafafa"/></svg></div><div class="bx" style="left:247.80px;top:227.66px"><svg width="108.50" height="107.00" viewBox="0 0 108.50 107.00"><rect x="0" y="0" width="108.50" height="107.00" rx="10" fill="#030303"/><g clip-path="url(#gclip)"><rect x="1.7" y="1.7" width="105.10" height="103.60" fill="url(#gbg)"/><ellipse cx="54.25" cy="93.00" rx="83" ry="39" fill="#1a1b19" opacity="0.5"/><ellipse cx="54.25" cy="93.00" rx="82" ry="38" fill="url(#gbot)"/></g><line x1="3.55" y1="83.36" x2="11.25" y2="78.91" stroke="#f2f2f2" stroke-width="1.5"/><line x1="3.55" y1="72.84" x2="8.35" y2="71.06" stroke="#b4b4b4" stroke-width="1.0"/><line x1="3.55" y1="63.57" x2="8.35" y2="62.65" stroke="#b4b4b4" stroke-width="1.0"/><line x1="3.55" y1="54.87" x2="8.35" y2="54.77" stroke="#b4b4b4" stroke-width="1.0"/><line x1="3.55" y1="46.24" x2="8.35" y2="46.95" stroke="#b4b4b4" stroke-width="1.0"/><line x1="3.55" y1="37.16" x2="11.25" y2="39.67" stroke="#f2f2f2" stroke-width="1.5"/><line x1="3.55" y1="27.03" x2="8.35" y2="29.54" stroke="#b4b4b4" stroke-width="1.0"/><line x1="3.55" y1="14.94" x2="8.36" y2="18.59" stroke="#b4b4b4" stroke-width="1.0"/><line x1="8.57" y1="4.63" x2="13.45" y2="9.82" stroke="#b4b4b4" stroke-width="1.0"/><line x1="21.20" y1="3.30" x2="24.39" y2="8.10" stroke="#b4b4b4" stroke-width="1.0"/><line x1="32.27" y1="3.30" x2="35.69" y2="11.00" stroke="#f2f2f2" stroke-width="1.5"/><line x1="41.78" y1="3.30" x2="43.02" y2="8.10" stroke="#b4b4b4" stroke-width="1.0"/><line x1="50.51" y1="3.30" x2="50.91" y2="8.10" stroke="#b4b4b4" stroke-width="1.0"/><line x1="58.99" y1="3.30" x2="58.59" y2="8.10" stroke="#b4b4b4" stroke-width="1.0"/><line x1="67.72" y1="3.30" x2="66.48" y2="8.10" stroke="#b4b4b4" stroke-width="1.0"/><line x1="77.23" y1="3.30" x2="73.81" y2="11.00" stroke="#f2f2f2" stroke-width="1.5"/><line x1="88.30" y1="3.30" x2="85.11" y2="8.10" stroke="#b4b4b4" stroke-width="1.0"/><line x1="100.93" y1="4.63" x2="96.05" y2="9.82" stroke="#b4b4b4" stroke-width="1.0"/><line x1="105.95" y1="14.94" x2="101.14" y2="18.59" stroke="#b4b4b4" stroke-width="1.0"/><line x1="105.95" y1="27.03" x2="101.15" y2="29.54" stroke="#b4b4b4" stroke-width="1.0"/><line x1="105.95" y1="37.16" x2="98.25" y2="39.67" stroke="#f2f2f2" stroke-width="1.5"/><line x1="105.95" y1="46.24" x2="101.15" y2="46.95" stroke="#b4b4b4" stroke-width="1.0"/><line x1="105.95" y1="54.87" x2="101.15" y2="54.77" stroke="#b4b4b4" stroke-width="1.0"/><line x1="105.95" y1="63.57" x2="101.15" y2="62.65" stroke="#b4b4b4" stroke-width="1.0"/><line x1="105.95" y1="72.84" x2="101.15" y2="71.06" stroke="#b4b4b4" stroke-width="1.0"/><line x1="105.95" y1="83.36" x2="98.25" y2="78.91" stroke="#f2f2f2" stroke-width="1.5"/><text x="23.55" y="74.86" font-size="13" fill="#deded6" text-anchor="middle">0.0</text><text x="23.55" y="46.71" font-size="13" fill="#deded6" text-anchor="middle">0.4</text><text x="39.68" y="23.00" font-size="13" fill="#deded6" text-anchor="middle">0.8</text><text x="69.82" y="23.00" font-size="13" fill="#deded6" text-anchor="middle">1.2</text><text x="85.95" y="46.71" font-size="13" fill="#deded6" text-anchor="middle">1.6</text><text x="85.95" y="74.86" font-size="13" fill="#deded6" text-anchor="middle">2.0</text><text x="54.75" y="39.4" font-size="13.6" fill="#f8dc6c" stroke="#f8dc6c" stroke-width="0.1" text-anchor="middle">kPa</text><text transform="translate(54.05 83.4) scale(1.08 1)" font-size="15" fill="#f8dc6c" stroke="#f8dc6c" stroke-width="0.38" text-anchor="middle">47700</text><text x="54.75" y="103" font-size="13" fill="#eee" text-anchor="middle" textLength="79.40" lengthAdjust="spacingAndGlyphs">×100000 FRP</text><circle cx="54.75" cy="53.40" r="6.7" fill="#363736"/><circle cx="54.75" cy="53.80" r="5.7" fill="#0c0c0c"/><circle cx="54.75" cy="53.60" r="4.4" fill="#1e1f1e"/><circle cx="54.75" cy="54.10" r="3.5" fill="#070707"/><polygon points="55.83,51.71 10.57,30.38 10.02,31.45 53.67,55.89" fill="#fafafa"/><circle cx="54.75" cy="53.80" r="2.35" fill="#fafafa"/></svg></div><div class="bx" style="left:370.00px;top:227.66px"><svg width="108.50" height="107.00" viewBox="0 0 108.50 107.00"><rect x="0" y="0" width="108.50" height="107.00" rx="10" fill="#030303"/><g clip-path="url(#gclip)"><rect x="1.7" y="1.7" width="105.10" height="103.60" fill="url(#gbg)"/><ellipse cx="54.25" cy="93.00" rx="83" ry="39" fill="#1a1b19" opacity="0.5"/><ellipse cx="54.25" cy="93.00" rx="82" ry="38" fill="url(#gbot)"/></g><line x1="3.55" y1="83.36" x2="11.25" y2="78.91" stroke="#f2f2f2" stroke-width="1.5"/><line x1="3.55" y1="75.68" x2="8.35" y2="73.63" stroke="#b4b4b4" stroke-width="1.0"/><line x1="3.55" y1="68.76" x2="8.35" y2="67.36" stroke="#b4b4b4" stroke-width="1.0"/><line x1="3.55" y1="62.30" x2="8.35" y2="61.51" stroke="#b4b4b4" stroke-width="1.0"/><line x1="3.55" y1="56.10" x2="8.35" y2="55.88" stroke="#b4b4b4" stroke-width="1.0"/><line x1="3.55" y1="49.96" x2="11.25" y2="50.54" stroke="#f2f2f2" stroke-width="1.5"/><line x1="3.55" y1="43.72" x2="8.35" y2="44.66" stroke="#b4b4b4" stroke-width="1.0"/><line x1="3.55" y1="37.16" x2="8.35" y2="38.72" stroke="#b4b4b4" stroke-width="1.0"/><line x1="3.55" y1="30.08" x2="8.35" y2="32.30" stroke="#b4b4b4" stroke-width="1.0"/><line x1="3.55" y1="22.16" x2="8.35" y2="25.13" stroke="#b4b4b4" stroke-width="1.0"/><line x1="3.56" y1="12.97" x2="11.77" y2="19.52" stroke="#f2f2f2" stroke-width="1.5"/><line x1="7.22" y1="5.56" x2="12.27" y2="10.68" stroke="#b4b4b4" stroke-width="1.0"/><line x1="15.70" y1="3.30" x2="19.41" y2="8.10" stroke="#b4b4b4" stroke-width="1.0"/><line x1="24.58" y1="3.30" x2="27.45" y2="8.10" stroke="#b4b4b4" stroke-width="1.0"/><line x1="32.27" y1="3.30" x2="34.40" y2="8.10" stroke="#b4b4b4" stroke-width="1.0"/><line x1="39.17" y1="3.30" x2="41.55" y2="11.00" stroke="#f2f2f2" stroke-width="1.5"/><line x1="45.59" y1="3.30" x2="46.46" y2="8.10" stroke="#b4b4b4" stroke-width="1.0"/><line x1="51.72" y1="3.30" x2="52.01" y2="8.10" stroke="#b4b4b4" stroke-width="1.0"/><line x1="57.78" y1="3.30" x2="57.49" y2="8.10" stroke="#b4b4b4" stroke-width="1.0"/><line x1="63.91" y1="3.30" x2="63.04" y2="8.10" stroke="#b4b4b4" stroke-width="1.0"/><line x1="70.33" y1="3.30" x2="67.95" y2="11.00" stroke="#f2f2f2" stroke-width="1.5"/><line x1="77.23" y1="3.30" x2="75.10" y2="8.10" stroke="#b4b4b4" stroke-width="1.0"/><line x1="84.92" y1="3.30" x2="82.05" y2="8.10" stroke="#b4b4b4" stroke-width="1.0"/><line x1="93.80" y1="3.30" x2="90.09" y2="8.10" stroke="#b4b4b4" stroke-width="1.0"/><line x1="102.28" y1="5.56" x2="97.23" y2="10.68" stroke="#b4b4b4" stroke-width="1.0"/><line x1="105.94" y1="12.97" x2="97.73" y2="19.52" stroke="#f2f2f2" stroke-width="1.5"/><line x1="105.95" y1="22.16" x2="101.15" y2="25.13" stroke="#b4b4b4" stroke-width="1.0"/><line x1="105.95" y1="30.08" x2="101.15" y2="32.30" stroke="#b4b4b4" stroke-width="1.0"/><line x1="105.95" y1="37.16" x2="101.15" y2="38.72" stroke="#b4b4b4" stroke-width="1.0"/><line x1="105.95" y1="43.72" x2="101.15" y2="44.66" stroke="#b4b4b4" stroke-width="1.0"/><line x1="105.95" y1="49.96" x2="98.25" y2="50.54" stroke="#f2f2f2" stroke-width="1.5"/><line x1="105.95" y1="56.10" x2="101.15" y2="55.88" stroke="#b4b4b4" stroke-width="1.0"/><line x1="105.95" y1="62.30" x2="101.15" y2="61.51" stroke="#b4b4b4" stroke-width="1.0"/><line x1="105.95" y1="68.76" x2="101.15" y2="67.36" stroke="#b4b4b4" stroke-width="1.0"/><line x1="105.95" y1="75.68" x2="101.15" y2="73.63" stroke="#b4b4b4" stroke-width="1.0"/><line x1="105.95" y1="83.36" x2="98.25" y2="78.91" stroke="#f2f2f2" stroke-width="1.5"/><text x="23.55" y="74.86" font-size="13" fill="#deded6" text-anchor="middle">0</text><text x="23.55" y="54.51" font-size="13" fill="#deded6" text-anchor="middle">50</text><text x="23.55" y="31.97" font-size="13" fill="#deded6" text-anchor="middle">100</text><text x="44.31" y="23.00" font-size="13" fill="#deded6" text-anchor="middle">150</text><text x="65.19" y="23.00" font-size="13" fill="#deded6" text-anchor="middle">200</text><text x="85.95" y="31.97" font-size="13" fill="#deded6" text-anchor="middle">250</text><text x="85.95" y="54.51" font-size="13" fill="#deded6" text-anchor="middle">300</text><text x="85.95" y="74.86" font-size="13" fill="#deded6" text-anchor="middle">350</text><text x="54.75" y="39.4" font-size="13.6" fill="#e06cc4" stroke="#e06cc4" stroke-width="0.1" text-anchor="middle">kPa</text><text transform="translate(54.05 83.4) scale(1.08 1)" font-size="15" fill="#e06cc4" stroke="#e06cc4" stroke-width="0.38" text-anchor="middle">115.2</text><text x="54.75" y="103" font-size="13" fill="#eee" text-anchor="middle" textLength="27.75" lengthAdjust="spacingAndGlyphs">MAP</text><circle cx="54.75" cy="53.40" r="6.7" fill="#363736"/><circle cx="54.75" cy="53.80" r="5.7" fill="#0c0c0c"/><circle cx="54.75" cy="53.60" r="4.4" fill="#1e1f1e"/><circle cx="54.75" cy="54.10" r="3.5" fill="#070707"/><polygon points="56.52,52.26 22.40,15.67 21.49,16.46 52.98,55.34" fill="#fafafa"/><circle cx="54.75" cy="53.80" r="2.35" fill="#fafafa"/></svg></div><div class="bx" style="left:3.40px;top:340.74px"><svg width="108.50" height="107.00" viewBox="0 0 108.50 107.00"><rect x="0" y="0" width="108.50" height="107.00" rx="10" fill="#030303"/><g clip-path="url(#gclip)"><rect x="1.7" y="1.7" width="105.10" height="103.60" fill="url(#gbg)"/><ellipse cx="54.25" cy="93.00" rx="83" ry="39" fill="#1a1b19" opacity="0.5"/><ellipse cx="54.25" cy="93.00" rx="82" ry="38" fill="url(#gbot)"/></g><text transform="translate(54.55 57.4) scale(1.05 1)" font-size="17" fill="#7ef0d0" stroke="#7ef0d0" stroke-width="0.6" text-anchor="middle">Off</text><text x="54.25" y="103" font-size="13" fill="#eee" text-anchor="middle" textLength="97.89" lengthAdjust="spacingAndGlyphs">VAPORIZER_M...</text></svg></div><div class="bx" style="left:125.60px;top:340.74px"><svg width="108.50" height="107.00" viewBox="0 0 108.50 107.00"><rect x="0" y="0" width="108.50" height="107.00" rx="10" fill="#030303"/><g clip-path="url(#gclip)"><rect x="1.7" y="1.7" width="105.10" height="103.60" fill="url(#gbg)"/><ellipse cx="54.25" cy="93.00" rx="83" ry="39" fill="#1a1b19" opacity="0.5"/><ellipse cx="54.25" cy="93.00" rx="82" ry="38" fill="url(#gbot)"/></g><line x1="3.55" y1="83.36" x2="11.25" y2="78.91" stroke="#f2f2f2" stroke-width="1.5"/><line x1="3.55" y1="72.84" x2="8.35" y2="71.06" stroke="#b4b4b4" stroke-width="1.0"/><line x1="3.55" y1="63.57" x2="8.35" y2="62.65" stroke="#b4b4b4" stroke-width="1.0"/><line x1="3.55" y1="54.87" x2="8.35" y2="54.77" stroke="#b4b4b4" stroke-width="1.0"/><line x1="3.55" y1="46.24" x2="8.35" y2="46.95" stroke="#b4b4b4" stroke-width="1.0"/><line x1="3.55" y1="37.16" x2="11.25" y2="39.67" stroke="#f2f2f2" stroke-width="1.5"/><line x1="3.55" y1="27.03" x2="8.35" y2="29.54" stroke="#b4b4b4" stroke-width="1.0"/><line x1="3.55" y1="14.94" x2="8.36" y2="18.59" stroke="#b4b4b4" stroke-width="1.0"/><line x1="8.57" y1="4.63" x2="13.45" y2="9.82" stroke="#b4b4b4" stroke-width="1.0"/><line x1="21.20" y1="3.30" x2="24.39" y2="8.10" stroke="#b4b4b4" stroke-width="1.0"/><line x1="32.27" y1="3.30" x2="35.69" y2="11.00" stroke="#f2f2f2" stroke-width="1.5"/><line x1="41.78" y1="3.30" x2="43.02" y2="8.10" stroke="#b4b4b4" stroke-width="1.0"/><line x1="50.51" y1="3.30" x2="50.91" y2="8.10" stroke="#b4b4b4" stroke-width="1.0"/><line x1="58.99" y1="3.30" x2="58.59" y2="8.10" stroke="#b4b4b4" stroke-width="1.0"/><line x1="67.72" y1="3.30" x2="66.48" y2="8.10" stroke="#b4b4b4" stroke-width="1.0"/><line x1="77.23" y1="3.30" x2="73.81" y2="11.00" stroke="#f2f2f2" stroke-width="1.5"/><line x1="88.30" y1="3.30" x2="85.11" y2="8.10" stroke="#b4b4b4" stroke-width="1.0"/><line x1="100.93" y1="4.63" x2="96.05" y2="9.82" stroke="#b4b4b4" stroke-width="1.0"/><line x1="105.95" y1="14.94" x2="101.14" y2="18.59" stroke="#b4b4b4" stroke-width="1.0"/><line x1="105.95" y1="27.03" x2="101.15" y2="29.54" stroke="#b4b4b4" stroke-width="1.0"/><line x1="105.95" y1="37.16" x2="98.25" y2="39.67" stroke="#f2f2f2" stroke-width="1.5"/><line x1="105.95" y1="46.24" x2="101.15" y2="46.95" stroke="#b4b4b4" stroke-width="1.0"/><line x1="105.95" y1="54.87" x2="101.15" y2="54.77" stroke="#b4b4b4" stroke-width="1.0"/><line x1="105.95" y1="63.57" x2="101.15" y2="62.65" stroke="#b4b4b4" stroke-width="1.0"/><line x1="105.95" y1="72.84" x2="101.15" y2="71.06" stroke="#b4b4b4" stroke-width="1.0"/><line x1="105.95" y1="83.36" x2="98.25" y2="78.91" stroke="#f2f2f2" stroke-width="1.5"/><text x="23.55" y="74.86" font-size="13" fill="#deded6" text-anchor="middle">0</text><text x="23.55" y="46.71" font-size="13" fill="#deded6" text-anchor="middle">20</text><text x="39.68" y="23.00" font-size="13" fill="#deded6" text-anchor="middle">40</text><text x="69.82" y="23.00" font-size="13" fill="#deded6" text-anchor="middle">60</text><text x="85.95" y="46.71" font-size="13" fill="#deded6" text-anchor="middle">80</text><text x="85.95" y="74.86" font-size="13" fill="#deded6" text-anchor="middle">100</text><g stroke="#f8aa3c" stroke-width="1.25" fill="none"><circle cx="52.35" cy="32.80" r="1.85"/><circle cx="57.25" cy="37.90" r="1.85"/><path d="M57.15 30.70L52.55 39.90"/></g><text transform="translate(54.05 83.4) scale(1.08 1)" font-size="15" fill="#f8aa3c" stroke="#f8aa3c" stroke-width="0.38" text-anchor="middle">49.00</text><text x="54.75" y="103" font-size="13" fill="#eee" text-anchor="middle" textLength="66.58" lengthAdjust="spacingAndGlyphs">DPF_LOAD</text><circle cx="54.75" cy="53.40" r="6.7" fill="#363736"/><circle cx="54.75" cy="53.80" r="5.7" fill="#0c0c0c"/><circle cx="54.75" cy="53.60" r="4.4" fill="#1e1f1e"/><circle cx="54.75" cy="54.10" r="3.5" fill="#070707"/><polygon points="57.10,53.70 53.26,3.82 52.06,3.87 52.40,53.90" fill="#fafafa"/><circle cx="54.75" cy="53.80" r="2.35" fill="#fafafa"/></svg></div><div class="bx" style="left:247.80px;top:340.74px"><svg width="108.50" height="107.00" viewBox="0 0 108.50 107.00"><rect x="0" y="0" width="108.50" height="107.00" rx="10" fill="#030303"/><g clip-path="url(#gclip)"><rect x="1.7" y="1.7" width="105.10" height="103.60" fill="url(#gbg)"/><ellipse cx="54.25" cy="93.00" rx="83" ry="39" fill="#1a1b19" opacity="0.5"/><ellipse cx="54.25" cy="93.00" rx="82" ry="38" fill="url(#gbot)"/></g><line x1="3.55" y1="83.36" x2="11.25" y2="78.91" stroke="#f2f2f2" stroke-width="1.5"/><line x1="3.55" y1="75.68" x2="8.35" y2="73.63" stroke="#b4b4b4" stroke-width="1.0"/><line x1="3.55" y1="68.76" x2="8.35" y2="67.36" stroke="#b4b4b4" stroke-width="1.0"/><line x1="3.55" y1="62.30" x2="8.35" y2="61.51" stroke="#b4b4b4" stroke-width="1.0"/><line x1="3.55" y1="56.10" x2="8.35" y2="55.88" stroke="#b4b4b4" stroke-width="1.0"/><line x1="3.55" y1="49.96" x2="11.25" y2="50.54" stroke="#f2f2f2" stroke-width="1.5"/><line x1="3.55" y1="43.72" x2="8.35" y2="44.66" stroke="#b4b4b4" stroke-width="1.0"/><line x1="3.55" y1="37.16" x2="8.35" y2="38.72" stroke="#b4b4b4" stroke-width="1.0"/><line x1="3.55" y1="30.08" x2="8.35" y2="32.30" stroke="#b4b4b4" stroke-width="1.0"/><line x1="3.55" y1="22.16" x2="8.35" y2="25.13" stroke="#b4b4b4" stroke-width="1.0"/><line x1="3.56" y1="12.97" x2="11.77" y2="19.52" stroke="#f2f2f2" stroke-width="1.5"/><line x1="7.22" y1="5.56" x2="12.27" y2="10.68" stroke="#b4b4b4" stroke-width="1.0"/><line x1="15.70" y1="3.30" x2="19.41" y2="8.10" stroke="#b4b4b4" stroke-width="1.0"/><line x1="24.58" y1="3.30" x2="27.45" y2="8.10" stroke="#b4b4b4" stroke-width="1.0"/><line x1="32.27" y1="3.30" x2="34.40" y2="8.10" stroke="#b4b4b4" stroke-width="1.0"/><line x1="39.17" y1="3.30" x2="41.55" y2="11.00" stroke="#f2f2f2" stroke-width="1.5"/><line x1="45.59" y1="3.30" x2="46.46" y2="8.10" stroke="#b4b4b4" stroke-width="1.0"/><line x1="51.72" y1="3.30" x2="52.01" y2="8.10" stroke="#b4b4b4" stroke-width="1.0"/><line x1="57.78" y1="3.30" x2="57.49" y2="8.10" stroke="#b4b4b4" stroke-width="1.0"/><line x1="63.91" y1="3.30" x2="63.04" y2="8.10" stroke="#b4b4b4" stroke-width="1.0"/><line x1="70.33" y1="3.30" x2="67.95" y2="11.00" stroke="#f2f2f2" stroke-width="1.5"/><line x1="77.23" y1="3.30" x2="75.10" y2="8.10" stroke="#b4b4b4" stroke-width="1.0"/><line x1="84.92" y1="3.30" x2="82.05" y2="8.10" stroke="#b4b4b4" stroke-width="1.0"/><line x1="93.80" y1="3.30" x2="90.09" y2="8.10" stroke="#b4b4b4" stroke-width="1.0"/><line x1="102.28" y1="5.56" x2="97.23" y2="10.68" stroke="#b4b4b4" stroke-width="1.0"/><line x1="105.94" y1="12.97" x2="97.73" y2="19.52" stroke="#f2f2f2" stroke-width="1.5"/><line x1="105.95" y1="22.16" x2="101.15" y2="25.13" stroke="#b4b4b4" stroke-width="1.0"/><line x1="105.95" y1="30.08" x2="101.15" y2="32.30" stroke="#b4b4b4" stroke-width="1.0"/><line x1="105.95" y1="37.16" x2="101.15" y2="38.72" stroke="#b4b4b4" stroke-width="1.0"/><line x1="105.95" y1="43.72" x2="101.15" y2="44.66" stroke="#b4b4b4" stroke-width="1.0"/><line x1="105.95" y1="49.96" x2="98.25" y2="50.54" stroke="#f2f2f2" stroke-width="1.5"/><line x1="105.95" y1="56.10" x2="101.15" y2="55.88" stroke="#b4b4b4" stroke-width="1.0"/><line x1="105.95" y1="62.30" x2="101.15" y2="61.51" stroke="#b4b4b4" stroke-width="1.0"/><line x1="105.95" y1="68.76" x2="101.15" y2="67.36" stroke="#b4b4b4" stroke-width="1.0"/><line x1="105.95" y1="75.68" x2="101.15" y2="73.63" stroke="#b4b4b4" stroke-width="1.0"/><line x1="105.95" y1="83.36" x2="98.25" y2="78.91" stroke="#f2f2f2" stroke-width="1.5"/><text x="23.55" y="74.86" font-size="13" fill="#deded6" text-anchor="middle">0</text><text x="23.55" y="54.51" font-size="13" fill="#deded6" text-anchor="middle">30</text><text x="23.55" y="31.97" font-size="13" fill="#deded6" text-anchor="middle">60</text><text x="44.31" y="23.00" font-size="13" fill="#deded6" text-anchor="middle">90</text><text x="65.19" y="23.00" font-size="13" fill="#deded6" text-anchor="middle">120</text><text x="85.95" y="31.97" font-size="13" fill="#deded6" text-anchor="middle">150</text><text x="85.95" y="54.51" font-size="13" fill="#deded6" text-anchor="middle">180</text><text x="85.95" y="74.86" font-size="13" fill="#deded6" text-anchor="middle">210</text><g stroke="#e84a40" stroke-width="1.25" fill="none"><circle cx="52.35" cy="32.80" r="1.85"/><circle cx="57.25" cy="37.90" r="1.85"/><path d="M57.15 30.70L52.55 39.90"/></g><text transform="translate(54.05 83.4) scale(1.08 1)" font-size="15" fill="#e84a40" stroke="#e84a40" stroke-width="0.38" text-anchor="middle">32.00</text><text x="54.75" y="103" font-size="13" fill="#eee" text-anchor="middle" textLength="89.70" lengthAdjust="spacingAndGlyphs">DPF_SOOT_LD</text><circle cx="54.75" cy="53.40" r="6.7" fill="#363736"/><circle cx="54.75" cy="53.80" r="5.7" fill="#0c0c0c"/><circle cx="54.75" cy="53.60" r="4.4" fill="#1e1f1e"/><circle cx="54.75" cy="54.10" r="3.5" fill="#070707"/><polygon points="55.02,51.47 5.15,47.48 5.01,48.67 54.48,56.13" fill="#fafafa"/><circle cx="54.75" cy="53.80" r="2.35" fill="#fafafa"/></svg></div><div class="bx" style="left:370.00px;top:340.74px"><svg width="108.50" height="107.00" viewBox="0 0 108.50 107.00"><rect x="0" y="0" width="108.50" height="107.00" rx="10" fill="#030303"/><g clip-path="url(#gclip)"><rect x="1.7" y="1.7" width="105.10" height="103.60" fill="url(#gbg)"/><ellipse cx="54.25" cy="93.00" rx="83" ry="39" fill="#1a1b19" opacity="0.5"/><ellipse cx="54.25" cy="93.00" rx="82" ry="38" fill="url(#gbot)"/></g><line x1="3.55" y1="83.36" x2="11.25" y2="78.91" stroke="#f2f2f2" stroke-width="1.5"/><line x1="3.55" y1="74.49" x2="8.35" y2="72.55" stroke="#b4b4b4" stroke-width="1.0"/><line x1="3.55" y1="66.57" x2="8.35" y2="65.37" stroke="#b4b4b4" stroke-width="1.0"/><line x1="3.55" y1="59.18" x2="8.35" y2="58.68" stroke="#b4b4b4" stroke-width="1.0"/><line x1="3.55" y1="52.01" x2="8.35" y2="52.18" stroke="#b4b4b4" stroke-width="1.0"/><line x1="3.55" y1="44.77" x2="11.25" y2="46.13" stroke="#f2f2f2" stroke-width="1.5"/><line x1="3.55" y1="37.16" x2="8.35" y2="38.72" stroke="#b4b4b4" stroke-width="1.0"/><line x1="3.55" y1="28.83" x2="8.35" y2="31.17" stroke="#b4b4b4" stroke-width="1.0"/><line x1="3.55" y1="19.27" x2="8.35" y2="22.50" stroke="#b4b4b4" stroke-width="1.0"/><line x1="4.67" y1="8.71" x2="9.92" y2="13.44" stroke="#b4b4b4" stroke-width="1.0"/><line x1="12.43" y1="3.36" x2="19.38" y2="11.64" stroke="#f2f2f2" stroke-width="1.5"/><line x1="23.19" y1="3.30" x2="26.19" y2="8.10" stroke="#b4b4b4" stroke-width="1.0"/><line x1="32.27" y1="3.30" x2="34.40" y2="8.10" stroke="#b4b4b4" stroke-width="1.0"/><line x1="40.27" y1="3.30" x2="41.65" y2="8.10" stroke="#b4b4b4" stroke-width="1.0"/><line x1="47.65" y1="3.30" x2="48.33" y2="8.10" stroke="#b4b4b4" stroke-width="1.0"/><line x1="54.75" y1="3.30" x2="54.75" y2="11.00" stroke="#f2f2f2" stroke-width="1.5"/><line x1="61.85" y1="3.30" x2="61.17" y2="8.10" stroke="#b4b4b4" stroke-width="1.0"/><line x1="69.23" y1="3.30" x2="67.85" y2="8.10" stroke="#b4b4b4" stroke-width="1.0"/><line x1="77.23" y1="3.30" x2="75.10" y2="8.10" stroke="#b4b4b4" stroke-width="1.0"/><line x1="86.31" y1="3.30" x2="83.31" y2="8.10" stroke="#b4b4b4" stroke-width="1.0"/><line x1="97.07" y1="3.36" x2="90.12" y2="11.64" stroke="#f2f2f2" stroke-width="1.5"/><line x1="104.83" y1="8.71" x2="99.58" y2="13.44" stroke="#b4b4b4" stroke-width="1.0"/><line x1="105.95" y1="19.27" x2="101.15" y2="22.50" stroke="#b4b4b4" stroke-width="1.0"/><line x1="105.95" y1="28.83" x2="101.15" y2="31.17" stroke="#b4b4b4" stroke-width="1.0"/><line x1="105.95" y1="37.16" x2="101.15" y2="38.72" stroke="#b4b4b4" stroke-width="1.0"/><line x1="105.95" y1="44.77" x2="98.25" y2="46.13" stroke="#f2f2f2" stroke-width="1.5"/><line x1="105.95" y1="52.01" x2="101.15" y2="52.18" stroke="#b4b4b4" stroke-width="1.0"/><line x1="105.95" y1="59.18" x2="101.15" y2="58.68" stroke="#b4b4b4" stroke-width="1.0"/><line x1="105.95" y1="66.57" x2="101.15" y2="65.37" stroke="#b4b4b4" stroke-width="1.0"/><line x1="105.95" y1="74.49" x2="101.15" y2="72.55" stroke="#b4b4b4" stroke-width="1.0"/><line x1="105.95" y1="83.36" x2="98.25" y2="78.91" stroke="#f2f2f2" stroke-width="1.5"/><text x="23.55" y="74.86" font-size="13" fill="#deded6" text-anchor="middle">-128</text><text x="23.55" y="51.35" font-size="13" fill="#deded6" text-anchor="middle">-78</text><text x="27.35" y="24.19" font-size="13" fill="#deded6" text-anchor="middle">-28</text><text x="54.75" y="23.00" font-size="13" fill="#deded6" text-anchor="middle">22</text><text x="82.15" y="24.19" font-size="13" fill="#deded6" text-anchor="middle">72</text><text x="85.95" y="51.35" font-size="13" fill="#deded6" text-anchor="middle">122</text><text x="85.95" y="74.86" font-size="13" fill="#deded6" text-anchor="middle">172</text><text x="54.75" y="39.4" font-size="13.6" fill="#9cee84" stroke="#9cee84" stroke-width="0.1" text-anchor="middle">kPa</text><text transform="translate(54.05 83.4) scale(1.08 1)" font-size="15" fill="#9cee84" stroke="#9cee84" stroke-width="0.38" text-anchor="middle">2.0</text><text x="54.75" y="103" font-size="13" fill="#eee" text-anchor="middle" textLength="49.76" lengthAdjust="spacingAndGlyphs">DP_DPF</text><circle cx="54.75" cy="53.40" r="6.7" fill="#363736"/><circle cx="54.75" cy="53.80" r="5.7" fill="#0c0c0c"/><circle cx="54.75" cy="53.60" r="4.4" fill="#1e1f1e"/><circle cx="54.75" cy="54.10" r="3.5" fill="#070707"/><polygon points="57.01,53.15 41.54,5.57 40.39,5.90 52.49,54.45" fill="#fafafa"/><circle cx="54.75" cy="53.80" r="2.35" fill="#fafafa"/></svg></div><div class="bx" style="left:3.40px;top:453.82px"><svg width="108.50" height="107.00" viewBox="0 0 108.50 107.00"><rect x="0" y="0" width="108.50" height="107.00" rx="10" fill="#030303"/><g clip-path="url(#gclip)"><rect x="1.7" y="1.7" width="105.10" height="103.60" fill="url(#gbg)"/><ellipse cx="54.25" cy="93.00" rx="83" ry="39" fill="#1a1b19" opacity="0.5"/><ellipse cx="54.25" cy="93.00" rx="82" ry="38" fill="url(#gbot)"/></g><line x1="3.55" y1="83.36" x2="11.25" y2="78.91" stroke="#f2f2f2" stroke-width="1.5"/><line x1="3.55" y1="72.84" x2="8.35" y2="71.06" stroke="#b4b4b4" stroke-width="1.0"/><line x1="3.55" y1="63.57" x2="8.35" y2="62.65" stroke="#b4b4b4" stroke-width="1.0"/><line x1="3.55" y1="54.87" x2="8.35" y2="54.77" stroke="#b4b4b4" stroke-width="1.0"/><line x1="3.55" y1="46.24" x2="8.35" y2="46.95" stroke="#b4b4b4" stroke-width="1.0"/><line x1="3.55" y1="37.16" x2="11.25" y2="39.67" stroke="#f2f2f2" stroke-width="1.5"/><line x1="3.55" y1="27.03" x2="8.35" y2="29.54" stroke="#b4b4b4" stroke-width="1.0"/><line x1="3.55" y1="14.94" x2="8.36" y2="18.59" stroke="#b4b4b4" stroke-width="1.0"/><line x1="8.57" y1="4.63" x2="13.45" y2="9.82" stroke="#b4b4b4" stroke-width="1.0"/><line x1="21.20" y1="3.30" x2="24.39" y2="8.10" stroke="#b4b4b4" stroke-width="1.0"/><line x1="32.27" y1="3.30" x2="35.69" y2="11.00" stroke="#f2f2f2" stroke-width="1.5"/><line x1="41.78" y1="3.30" x2="43.02" y2="8.10" stroke="#b4b4b4" stroke-width="1.0"/><line x1="50.51" y1="3.30" x2="50.91" y2="8.10" stroke="#b4b4b4" stroke-width="1.0"/><line x1="58.99" y1="3.30" x2="58.59" y2="8.10" stroke="#b4b4b4" stroke-width="1.0"/><line x1="67.72" y1="3.30" x2="66.48" y2="8.10" stroke="#b4b4b4" stroke-width="1.0"/><line x1="77.23" y1="3.30" x2="73.81" y2="11.00" stroke="#f2f2f2" stroke-width="1.5"/><line x1="88.30" y1="3.30" x2="85.11" y2="8.10" stroke="#b4b4b4" stroke-width="1.0"/><line x1="100.93" y1="4.63" x2="96.05" y2="9.82" stroke="#b4b4b4" stroke-width="1.0"/><line x1="105.95" y1="14.94" x2="101.14" y2="18.59" stroke="#b4b4b4" stroke-width="1.0"/><line x1="105.95" y1="27.03" x2="101.15" y2="29.54" stroke="#b4b4b4" stroke-width="1.0"/><line x1="105.95" y1="37.16" x2="98.25" y2="39.67" stroke="#f2f2f2" stroke-width="1.5"/><line x1="105.95" y1="46.24" x2="101.15" y2="46.95" stroke="#b4b4b4" stroke-width="1.0"/><line x1="105.95" y1="54.87" x2="101.15" y2="54.77" stroke="#b4b4b4" stroke-width="1.0"/><line x1="105.95" y1="63.57" x2="101.15" y2="62.65" stroke="#b4b4b4" stroke-width="1.0"/><line x1="105.95" y1="72.84" x2="101.15" y2="71.06" stroke="#b4b4b4" stroke-width="1.0"/><line x1="105.95" y1="83.36" x2="98.25" y2="78.91" stroke="#f2f2f2" stroke-width="1.5"/><text x="23.55" y="74.86" font-size="13" fill="#deded6" text-anchor="middle">-50</text><text x="23.55" y="46.71" font-size="13" fill="#deded6" text-anchor="middle">-30</text><text x="39.68" y="23.00" font-size="13" fill="#deded6" text-anchor="middle">-10</text><text x="69.82" y="23.00" font-size="13" fill="#deded6" text-anchor="middle">10</text><text x="85.95" y="46.71" font-size="13" fill="#deded6" text-anchor="middle">30</text><text x="85.95" y="74.86" font-size="13" fill="#deded6" text-anchor="middle">50</text><g stroke="#4ab0e8" stroke-width="1.25" fill="none"><circle cx="52.35" cy="32.80" r="1.85"/><circle cx="57.25" cy="37.90" r="1.85"/><path d="M57.15 30.70L52.55 39.90"/></g><text transform="translate(54.05 83.4) scale(1.08 1)" font-size="15" fill="#4ab0e8" stroke="#4ab0e8" stroke-width="0.38" text-anchor="middle">-3.91</text><text x="54.75" y="103" font-size="13" fill="#eee" text-anchor="middle" textLength="57.20" lengthAdjust="spacingAndGlyphs">EGR_ERR</text><circle cx="54.75" cy="53.40" r="6.7" fill="#363736"/><circle cx="54.75" cy="53.80" r="5.7" fill="#0c0c0c"/><circle cx="54.75" cy="53.60" r="4.4" fill="#1e1f1e"/><circle cx="54.75" cy="54.10" r="3.5" fill="#070707"/><polygon points="57.07,53.42 47.19,4.37 46.01,4.57 52.43,54.18" fill="#fafafa"/><circle cx="54.75" cy="53.80" r="2.35" fill="#fafafa"/></svg></div><div class="bx" style="left:125.60px;top:453.82px"><svg width="108.50" height="107.00" viewBox="0 0 108.50 107.00"><rect x="0" y="0" width="108.50" height="107.00" rx="10" fill="#030303"/><g clip-path="url(#gclip)"><rect x="1.7" y="1.7" width="105.10" height="103.60" fill="url(#gbg)"/><ellipse cx="54.25" cy="93.00" rx="83" ry="39" fill="#1a1b19" opacity="0.5"/><ellipse cx="54.25" cy="93.00" rx="82" ry="38" fill="url(#gbot)"/></g><line x1="3.55" y1="83.36" x2="11.25" y2="78.91" stroke="#f2f2f2" stroke-width="1.5"/><line x1="3.55" y1="72.84" x2="8.35" y2="71.06" stroke="#b4b4b4" stroke-width="1.0"/><line x1="3.55" y1="63.57" x2="8.35" y2="62.65" stroke="#b4b4b4" stroke-width="1.0"/><line x1="3.55" y1="54.87" x2="8.35" y2="54.77" stroke="#b4b4b4" stroke-width="1.0"/><line x1="3.55" y1="46.24" x2="8.35" y2="46.95" stroke="#b4b4b4" stroke-width="1.0"/><line x1="3.55" y1="37.16" x2="11.25" y2="39.67" stroke="#f2f2f2" stroke-width="1.5"/><line x1="3.55" y1="27.03" x2="8.35" y2="29.54" stroke="#b4b4b4" stroke-width="1.0"/><line x1="3.55" y1="14.94" x2="8.36" y2="18.59" stroke="#b4b4b4" stroke-width="1.0"/><line x1="8.57" y1="4.63" x2="13.45" y2="9.82" stroke="#b4b4b4" stroke-width="1.0"/><line x1="21.20" y1="3.30" x2="24.39" y2="8.10" stroke="#b4b4b4" stroke-width="1.0"/><line x1="32.27" y1="3.30" x2="35.69" y2="11.00" stroke="#f2f2f2" stroke-width="1.5"/><line x1="41.78" y1="3.30" x2="43.02" y2="8.10" stroke="#b4b4b4" stroke-width="1.0"/><line x1="50.51" y1="3.30" x2="50.91" y2="8.10" stroke="#b4b4b4" stroke-width="1.0"/><line x1="58.99" y1="3.30" x2="58.59" y2="8.10" stroke="#b4b4b4" stroke-width="1.0"/><line x1="67.72" y1="3.30" x2="66.48" y2="8.10" stroke="#b4b4b4" stroke-width="1.0"/><line x1="77.23" y1="3.30" x2="73.81" y2="11.00" stroke="#f2f2f2" stroke-width="1.5"/><line x1="88.30" y1="3.30" x2="85.11" y2="8.10" stroke="#b4b4b4" stroke-width="1.0"/><line x1="100.93" y1="4.63" x2="96.05" y2="9.82" stroke="#b4b4b4" stroke-width="1.0"/><line x1="105.95" y1="14.94" x2="101.14" y2="18.59" stroke="#b4b4b4" stroke-width="1.0"/><line x1="105.95" y1="27.03" x2="101.15" y2="29.54" stroke="#b4b4b4" stroke-width="1.0"/><line x1="105.95" y1="37.16" x2="98.25" y2="39.67" stroke="#f2f2f2" stroke-width="1.5"/><line x1="105.95" y1="46.24" x2="101.15" y2="46.95" stroke="#b4b4b4" stroke-width="1.0"/><line x1="105.95" y1="54.87" x2="101.15" y2="54.77" stroke="#b4b4b4" stroke-width="1.0"/><line x1="105.95" y1="63.57" x2="101.15" y2="62.65" stroke="#b4b4b4" stroke-width="1.0"/><line x1="105.95" y1="72.84" x2="101.15" y2="71.06" stroke="#b4b4b4" stroke-width="1.0"/><line x1="105.95" y1="83.36" x2="98.25" y2="78.91" stroke="#f2f2f2" stroke-width="1.5"/><text x="23.55" y="74.86" font-size="13" fill="#deded6" text-anchor="middle">0</text><text x="23.55" y="46.71" font-size="13" fill="#deded6" text-anchor="middle">20</text><text x="39.68" y="23.00" font-size="13" fill="#deded6" text-anchor="middle">40</text><text x="69.82" y="23.00" font-size="13" fill="#deded6" text-anchor="middle">60</text><text x="85.95" y="46.71" font-size="13" fill="#deded6" text-anchor="middle">80</text><text x="85.95" y="74.86" font-size="13" fill="#deded6" text-anchor="middle">100</text><g stroke="#f8dc6c" stroke-width="1.25" fill="none"><circle cx="52.35" cy="32.80" r="1.85"/><circle cx="57.25" cy="37.90" r="1.85"/><path d="M57.15 30.70L52.55 39.90"/></g><text transform="translate(54.05 83.4) scale(1.08 1)" font-size="15" fill="#f8dc6c" stroke="#f8dc6c" stroke-width="0.38" text-anchor="middle">12.55</text><text x="54.75" y="103" font-size="13" fill="#eee" text-anchor="middle" textLength="56.49" lengthAdjust="spacingAndGlyphs">EGR_PCT</text><circle cx="54.75" cy="53.40" r="6.7" fill="#363736"/><circle cx="54.75" cy="53.80" r="5.7" fill="#0c0c0c"/><circle cx="54.75" cy="53.60" r="4.4" fill="#1e1f1e"/><circle cx="54.75" cy="54.10" r="3.5" fill="#070707"/><polygon points="55.48,51.57 7.38,37.78 7.01,38.92 54.02,56.03" fill="#fafafa"/><circle cx="54.75" cy="53.80" r="2.35" fill="#fafafa"/></svg></div><div class="bx" style="left:247.80px;top:453.82px"><svg width="108.50" height="107.00" viewBox="0 0 108.50 107.00"><rect x="0" y="0" width="108.50" height="107.00" rx="10" fill="#030303"/><g clip-path="url(#gclip)"><rect x="1.7" y="1.7" width="105.10" height="103.60" fill="url(#gbg)"/><ellipse cx="54.25" cy="93.00" rx="83" ry="39" fill="#1a1b19" opacity="0.5"/><ellipse cx="54.25" cy="93.00" rx="82" ry="38" fill="url(#gbot)"/></g><line x1="3.55" y1="83.36" x2="11.25" y2="78.91" stroke="#f2f2f2" stroke-width="1.5"/><line x1="3.55" y1="74.49" x2="8.35" y2="72.55" stroke="#b4b4b4" stroke-width="1.0"/><line x1="3.55" y1="66.57" x2="8.35" y2="65.37" stroke="#b4b4b4" stroke-width="1.0"/><line x1="3.55" y1="59.18" x2="8.35" y2="58.68" stroke="#b4b4b4" stroke-width="1.0"/><line x1="3.55" y1="52.01" x2="8.35" y2="52.18" stroke="#b4b4b4" stroke-width="1.0"/><line x1="3.55" y1="44.77" x2="11.25" y2="46.13" stroke="#f2f2f2" stroke-width="1.5"/><line x1="3.55" y1="37.16" x2="8.35" y2="38.72" stroke="#b4b4b4" stroke-width="1.0"/><line x1="3.55" y1="28.83" x2="8.35" y2="31.17" stroke="#b4b4b4" stroke-width="1.0"/><line x1="3.55" y1="19.27" x2="8.35" y2="22.50" stroke="#b4b4b4" stroke-width="1.0"/><line x1="4.67" y1="8.71" x2="9.92" y2="13.44" stroke="#b4b4b4" stroke-width="1.0"/><line x1="12.43" y1="3.36" x2="19.38" y2="11.64" stroke="#f2f2f2" stroke-width="1.5"/><line x1="23.19" y1="3.30" x2="26.19" y2="8.10" stroke="#b4b4b4" stroke-width="1.0"/><line x1="32.27" y1="3.30" x2="34.40" y2="8.10" stroke="#b4b4b4" stroke-width="1.0"/><line x1="40.27" y1="3.30" x2="41.65" y2="8.10" stroke="#b4b4b4" stroke-width="1.0"/><line x1="47.65" y1="3.30" x2="48.33" y2="8.10" stroke="#b4b4b4" stroke-width="1.0"/><line x1="54.75" y1="3.30" x2="54.75" y2="11.00" stroke="#f2f2f2" stroke-width="1.5"/><line x1="61.85" y1="3.30" x2="61.17" y2="8.10" stroke="#b4b4b4" stroke-width="1.0"/><line x1="69.23" y1="3.30" x2="67.85" y2="8.10" stroke="#b4b4b4" stroke-width="1.0"/><line x1="77.23" y1="3.30" x2="75.10" y2="8.10" stroke="#b4b4b4" stroke-width="1.0"/><line x1="86.31" y1="3.30" x2="83.31" y2="8.10" stroke="#b4b4b4" stroke-width="1.0"/><line x1="97.07" y1="3.36" x2="90.12" y2="11.64" stroke="#f2f2f2" stroke-width="1.5"/><line x1="104.83" y1="8.71" x2="99.58" y2="13.44" stroke="#b4b4b4" stroke-width="1.0"/><line x1="105.95" y1="19.27" x2="101.15" y2="22.50" stroke="#b4b4b4" stroke-width="1.0"/><line x1="105.95" y1="28.83" x2="101.15" y2="31.17" stroke="#b4b4b4" stroke-width="1.0"/><line x1="105.95" y1="37.16" x2="101.15" y2="38.72" stroke="#b4b4b4" stroke-width="1.0"/><line x1="105.95" y1="44.77" x2="98.25" y2="46.13" stroke="#f2f2f2" stroke-width="1.5"/><line x1="105.95" y1="52.01" x2="101.15" y2="52.18" stroke="#b4b4b4" stroke-width="1.0"/><line x1="105.95" y1="59.18" x2="101.15" y2="58.68" stroke="#b4b4b4" stroke-width="1.0"/><line x1="105.95" y1="66.57" x2="101.15" y2="65.37" stroke="#b4b4b4" stroke-width="1.0"/><line x1="105.95" y1="74.49" x2="101.15" y2="72.55" stroke="#b4b4b4" stroke-width="1.0"/><line x1="105.95" y1="83.36" x2="98.25" y2="78.91" stroke="#f2f2f2" stroke-width="1.5"/><text x="23.55" y="74.86" font-size="13" fill="#deded6" text-anchor="middle">0.0</text><text x="23.55" y="51.35" font-size="13" fill="#deded6" text-anchor="middle">0.3</text><text x="27.35" y="24.19" font-size="13" fill="#deded6" text-anchor="middle">0.6</text><text x="54.75" y="23.00" font-size="13" fill="#deded6" text-anchor="middle">0.9</text><text x="82.15" y="24.19" font-size="13" fill="#deded6" text-anchor="middle">1.2</text><text x="85.95" y="51.35" font-size="13" fill="#deded6" text-anchor="middle">1.5</text><text x="85.95" y="74.86" font-size="13" fill="#deded6" text-anchor="middle">1.8</text><text x="54.75" y="39.4" font-size="13.6" fill="#e06cc4" stroke="#e06cc4" stroke-width="0.1" text-anchor="middle">°C</text><text transform="translate(54.05 83.4) scale(1.08 1)" font-size="15" fill="#e06cc4" stroke="#e06cc4" stroke-width="0.38" text-anchor="middle">150</text><text x="54.75" y="103" font-size="13" fill="#eee" text-anchor="middle" textLength="79.15" lengthAdjust="spacingAndGlyphs">×1000 EGT11</text><circle cx="54.75" cy="53.40" r="6.7" fill="#363736"/><circle cx="54.75" cy="53.80" r="5.7" fill="#0c0c0c"/><circle cx="54.75" cy="53.60" r="4.4" fill="#1e1f1e"/><circle cx="54.75" cy="54.10" r="3.5" fill="#070707"/><polygon points="54.34,51.49 5.41,61.89 5.61,63.07 55.16,56.11" fill="#fafafa"/><circle cx="54.75" cy="53.80" r="2.35" fill="#fafafa"/></svg></div><div class="bx" style="left:370.00px;top:453.82px"><svg width="108.50" height="107.00" viewBox="0 0 108.50 107.00"><rect x="0" y="0" width="108.50" height="107.00" rx="10" fill="#030303"/><g clip-path="url(#gclip)"><rect x="1.7" y="1.7" width="105.10" height="103.60" fill="url(#gbg)"/><ellipse cx="54.25" cy="93.00" rx="83" ry="39" fill="#1a1b19" opacity="0.5"/><ellipse cx="54.25" cy="93.00" rx="82" ry="38" fill="url(#gbot)"/></g><line x1="3.55" y1="83.36" x2="11.25" y2="78.91" stroke="#f2f2f2" stroke-width="1.5"/><line x1="3.55" y1="74.49" x2="8.35" y2="72.55" stroke="#b4b4b4" stroke-width="1.0"/><line x1="3.55" y1="66.57" x2="8.35" y2="65.37" stroke="#b4b4b4" stroke-width="1.0"/><line x1="3.55" y1="59.18" x2="8.35" y2="58.68" stroke="#b4b4b4" stroke-width="1.0"/><line x1="3.55" y1="52.01" x2="8.35" y2="52.18" stroke="#b4b4b4" stroke-width="1.0"/><line x1="3.55" y1="44.77" x2="11.25" y2="46.13" stroke="#f2f2f2" stroke-width="1.5"/><line x1="3.55" y1="37.16" x2="8.35" y2="38.72" stroke="#b4b4b4" stroke-width="1.0"/><line x1="3.55" y1="28.83" x2="8.35" y2="31.17" stroke="#b4b4b4" stroke-width="1.0"/><line x1="3.55" y1="19.27" x2="8.35" y2="22.50" stroke="#b4b4b4" stroke-width="1.0"/><line x1="4.67" y1="8.71" x2="9.92" y2="13.44" stroke="#b4b4b4" stroke-width="1.0"/><line x1="12.43" y1="3.36" x2="19.38" y2="11.64" stroke="#f2f2f2" stroke-width="1.5"/><line x1="23.19" y1="3.30" x2="26.19" y2="8.10" stroke="#b4b4b4" stroke-width="1.0"/><line x1="32.27" y1="3.30" x2="34.40" y2="8.10" stroke="#b4b4b4" stroke-width="1.0"/><line x1="40.27" y1="3.30" x2="41.65" y2="8.10" stroke="#b4b4b4" stroke-width="1.0"/><line x1="47.65" y1="3.30" x2="48.33" y2="8.10" stroke="#b4b4b4" stroke-width="1.0"/><line x1="54.75" y1="3.30" x2="54.75" y2="11.00" stroke="#f2f2f2" stroke-width="1.5"/><line x1="61.85" y1="3.30" x2="61.17" y2="8.10" stroke="#b4b4b4" stroke-width="1.0"/><line x1="69.23" y1="3.30" x2="67.85" y2="8.10" stroke="#b4b4b4" stroke-width="1.0"/><line x1="77.23" y1="3.30" x2="75.10" y2="8.10" stroke="#b4b4b4" stroke-width="1.0"/><line x1="86.31" y1="3.30" x2="83.31" y2="8.10" stroke="#b4b4b4" stroke-width="1.0"/><line x1="97.07" y1="3.36" x2="90.12" y2="11.64" stroke="#f2f2f2" stroke-width="1.5"/><line x1="104.83" y1="8.71" x2="99.58" y2="13.44" stroke="#b4b4b4" stroke-width="1.0"/><line x1="105.95" y1="19.27" x2="101.15" y2="22.50" stroke="#b4b4b4" stroke-width="1.0"/><line x1="105.95" y1="28.83" x2="101.15" y2="31.17" stroke="#b4b4b4" stroke-width="1.0"/><line x1="105.95" y1="37.16" x2="101.15" y2="38.72" stroke="#b4b4b4" stroke-width="1.0"/><line x1="105.95" y1="44.77" x2="98.25" y2="46.13" stroke="#f2f2f2" stroke-width="1.5"/><line x1="105.95" y1="52.01" x2="101.15" y2="52.18" stroke="#b4b4b4" stroke-width="1.0"/><line x1="105.95" y1="59.18" x2="101.15" y2="58.68" stroke="#b4b4b4" stroke-width="1.0"/><line x1="105.95" y1="66.57" x2="101.15" y2="65.37" stroke="#b4b4b4" stroke-width="1.0"/><line x1="105.95" y1="74.49" x2="101.15" y2="72.55" stroke="#b4b4b4" stroke-width="1.0"/><line x1="105.95" y1="83.36" x2="98.25" y2="78.91" stroke="#f2f2f2" stroke-width="1.5"/><text x="23.55" y="74.86" font-size="13" fill="#deded6" text-anchor="middle">0.0</text><text x="23.55" y="51.35" font-size="13" fill="#deded6" text-anchor="middle">0.3</text><text x="27.35" y="24.19" font-size="13" fill="#deded6" text-anchor="middle">0.6</text><text x="54.75" y="23.00" font-size="13" fill="#deded6" text-anchor="middle">0.9</text><text x="82.15" y="24.19" font-size="13" fill="#deded6" text-anchor="middle">1.2</text><text x="85.95" y="51.35" font-size="13" fill="#deded6" text-anchor="middle">1.5</text><text x="85.95" y="74.86" font-size="13" fill="#deded6" text-anchor="middle">1.8</text><text x="54.75" y="39.4" font-size="13.6" fill="#74ecd0" stroke="#74ecd0" stroke-width="0.1" text-anchor="middle">°C</text><text transform="translate(54.05 83.4) scale(1.08 1)" font-size="15" fill="#74ecd0" stroke="#74ecd0" stroke-width="0.38" text-anchor="middle">160</text><text x="54.75" y="103" font-size="13" fill="#eee" text-anchor="middle" textLength="80.11" lengthAdjust="spacingAndGlyphs">×1000 EGT12</text><circle cx="54.75" cy="53.40" r="6.7" fill="#363736"/><circle cx="54.75" cy="53.80" r="5.7" fill="#0c0c0c"/><circle cx="54.75" cy="53.60" r="4.4" fill="#1e1f1e"/><circle cx="54.75" cy="54.10" r="3.5" fill="#070707"/><polygon points="54.40,51.48 5.23,60.74 5.41,61.93 55.10,56.12" fill="#fafafa"/><circle cx="54.75" cy="53.80" r="2.35" fill="#fafafa"/></svg></div><div class="bx" style="left:3.40px;top:566.90px"><svg width="108.50" height="107.00" viewBox="0 0 108.50 107.00"><rect x="0" y="0" width="108.50" height="107.00" rx="10" fill="#030303"/><g clip-path="url(#gclip)"><rect x="1.7" y="1.7" width="105.10" height="103.60" fill="url(#gbg)"/><ellipse cx="54.25" cy="93.00" rx="83" ry="39" fill="#1a1b19" opacity="0.5"/><ellipse cx="54.25" cy="93.00" rx="82" ry="38" fill="url(#gbot)"/></g><text x="54.25" y="24.9" font-size="15" fill="#f8aa3c" stroke="#f8aa3c" stroke-width="0.2" text-anchor="middle">1/min</text><text transform="translate(54.55 57.4) scale(1.05 1)" font-size="17" fill="#f8aa3c" stroke="#f8aa3c" stroke-width="0.6" text-anchor="middle">70</text><text x="54.25" y="103" font-size="13" fill="#eee" text-anchor="middle" textLength="59.13" lengthAdjust="spacingAndGlyphs">INJ_BAL1</text></svg></div><div class="bx" style="left:125.60px;top:566.90px"><svg width="108.50" height="107.00" viewBox="0 0 108.50 107.00"><rect x="0" y="0" width="108.50" height="107.00" rx="10" fill="#030303"/><g clip-path="url(#gclip)"><rect x="1.7" y="1.7" width="105.10" height="103.60" fill="url(#gbg)"/><ellipse cx="54.25" cy="93.00" rx="83" ry="39" fill="#1a1b19" opacity="0.5"/><ellipse cx="54.25" cy="93.00" rx="82" ry="38" fill="url(#gbot)"/></g><text x="54.25" y="24.9" font-size="15" fill="#e84a40" stroke="#e84a40" stroke-width="0.2" text-anchor="middle">1/min</text><text transform="translate(54.55 57.4) scale(1.05 1)" font-size="17" fill="#e84a40" stroke="#e84a40" stroke-width="0.6" text-anchor="middle">33</text><text x="54.25" y="103" font-size="13" fill="#eee" text-anchor="middle" textLength="59.13" lengthAdjust="spacingAndGlyphs">INJ_BAL2</text></svg></div><div class="bx" style="left:247.80px;top:566.90px"><svg width="108.50" height="107.00" viewBox="0 0 108.50 107.00"><rect x="0" y="0" width="108.50" height="107.00" rx="10" fill="#030303"/><g clip-path="url(#gclip)"><rect x="1.7" y="1.7" width="105.10" height="103.60" fill="url(#gbg)"/><ellipse cx="54.25" cy="93.00" rx="83" ry="39" fill="#1a1b19" opacity="0.5"/><ellipse cx="54.25" cy="93.00" rx="82" ry="38" fill="url(#gbot)"/></g><text x="54.25" y="24.9" font-size="15" fill="#9cee84" stroke="#9cee84" stroke-width="0.2" text-anchor="middle">1/min</text><text transform="translate(54.55 57.4) scale(1.05 1)" font-size="17" fill="#9cee84" stroke="#9cee84" stroke-width="0.6" text-anchor="middle">27</text><text x="54.25" y="103" font-size="13" fill="#eee" text-anchor="middle" textLength="59.13" lengthAdjust="spacingAndGlyphs">INJ_BAL3</text></svg></div><div class="bx" style="left:370.00px;top:566.90px"><svg width="108.50" height="107.00" viewBox="0 0 108.50 107.00"><rect x="0" y="0" width="108.50" height="107.00" rx="10" fill="#030303"/><g clip-path="url(#gclip)"><rect x="1.7" y="1.7" width="105.10" height="103.60" fill="url(#gbg)"/><ellipse cx="54.25" cy="93.00" rx="83" ry="39" fill="#1a1b19" opacity="0.5"/><ellipse cx="54.25" cy="93.00" rx="82" ry="38" fill="url(#gbot)"/></g><text x="54.25" y="24.9" font-size="15" fill="#4ab0e8" stroke="#4ab0e8" stroke-width="0.2" text-anchor="middle">1/min</text><text transform="translate(54.55 57.4) scale(1.05 1)" font-size="17" fill="#4ab0e8" stroke="#4ab0e8" stroke-width="0.6" text-anchor="middle">-88</text><text x="54.25" y="103" font-size="13" fill="#eee" text-anchor="middle" textLength="59.13" lengthAdjust="spacingAndGlyphs">INJ_BAL4</text></svg></div><div class="bx" style="left:3.40px;top:679.98px"><svg width="108.50" height="107.00" viewBox="0 0 108.50 107.00"><rect x="0" y="0" width="108.50" height="107.00" rx="10" fill="#030303"/><g clip-path="url(#gclip)"><rect x="1.7" y="1.7" width="105.10" height="103.60" fill="url(#gbg)"/><ellipse cx="54.25" cy="93.00" rx="83" ry="39" fill="#1a1b19" opacity="0.5"/><ellipse cx="54.25" cy="93.00" rx="82" ry="38" fill="url(#gbot)"/></g><line x1="3.55" y1="83.36" x2="11.25" y2="78.91" stroke="#f2f2f2" stroke-width="1.5"/><line x1="3.55" y1="72.84" x2="8.35" y2="71.06" stroke="#b4b4b4" stroke-width="1.0"/><line x1="3.55" y1="63.57" x2="8.35" y2="62.65" stroke="#b4b4b4" stroke-width="1.0"/><line x1="3.55" y1="54.87" x2="8.35" y2="54.77" stroke="#b4b4b4" stroke-width="1.0"/><line x1="3.55" y1="46.24" x2="8.35" y2="46.95" stroke="#b4b4b4" stroke-width="1.0"/><line x1="3.55" y1="37.16" x2="11.25" y2="39.67" stroke="#f2f2f2" stroke-width="1.5"/><line x1="3.55" y1="27.03" x2="8.35" y2="29.54" stroke="#b4b4b4" stroke-width="1.0"/><line x1="3.55" y1="14.94" x2="8.36" y2="18.59" stroke="#b4b4b4" stroke-width="1.0"/><line x1="8.57" y1="4.63" x2="13.45" y2="9.82" stroke="#b4b4b4" stroke-width="1.0"/><line x1="21.20" y1="3.30" x2="24.39" y2="8.10" stroke="#b4b4b4" stroke-width="1.0"/><line x1="32.27" y1="3.30" x2="35.69" y2="11.00" stroke="#f2f2f2" stroke-width="1.5"/><line x1="41.78" y1="3.30" x2="43.02" y2="8.10" stroke="#b4b4b4" stroke-width="1.0"/><line x1="50.51" y1="3.30" x2="50.91" y2="8.10" stroke="#b4b4b4" stroke-width="1.0"/><line x1="58.99" y1="3.30" x2="58.59" y2="8.10" stroke="#b4b4b4" stroke-width="1.0"/><line x1="67.72" y1="3.30" x2="66.48" y2="8.10" stroke="#b4b4b4" stroke-width="1.0"/><line x1="77.23" y1="3.30" x2="73.81" y2="11.00" stroke="#f2f2f2" stroke-width="1.5"/><line x1="88.30" y1="3.30" x2="85.11" y2="8.10" stroke="#b4b4b4" stroke-width="1.0"/><line x1="100.93" y1="4.63" x2="96.05" y2="9.82" stroke="#b4b4b4" stroke-width="1.0"/><line x1="105.95" y1="14.94" x2="101.14" y2="18.59" stroke="#b4b4b4" stroke-width="1.0"/><line x1="105.95" y1="27.03" x2="101.15" y2="29.54" stroke="#b4b4b4" stroke-width="1.0"/><line x1="105.95" y1="37.16" x2="98.25" y2="39.67" stroke="#f2f2f2" stroke-width="1.5"/><line x1="105.95" y1="46.24" x2="101.15" y2="46.95" stroke="#b4b4b4" stroke-width="1.0"/><line x1="105.95" y1="54.87" x2="101.15" y2="54.77" stroke="#b4b4b4" stroke-width="1.0"/><line x1="105.95" y1="63.57" x2="101.15" y2="62.65" stroke="#b4b4b4" stroke-width="1.0"/><line x1="105.95" y1="72.84" x2="101.15" y2="71.06" stroke="#b4b4b4" stroke-width="1.0"/><line x1="105.95" y1="83.36" x2="98.25" y2="78.91" stroke="#f2f2f2" stroke-width="1.5"/><text x="23.55" y="74.86" font-size="13" fill="#deded6" text-anchor="middle">0</text><text x="23.55" y="46.71" font-size="13" fill="#deded6" text-anchor="middle">20</text><text x="39.68" y="23.00" font-size="13" fill="#deded6" text-anchor="middle">40</text><text x="69.82" y="23.00" font-size="13" fill="#deded6" text-anchor="middle">60</text><text x="85.95" y="46.71" font-size="13" fill="#deded6" text-anchor="middle">80</text><text x="85.95" y="74.86" font-size="13" fill="#deded6" text-anchor="middle">100</text><g stroke="#f8dc6c" stroke-width="1.25" fill="none"><circle cx="52.35" cy="32.80" r="1.85"/><circle cx="57.25" cy="37.90" r="1.85"/><path d="M57.15 30.70L52.55 39.90"/></g><text transform="translate(54.05 83.4) scale(1.08 1)" font-size="15" fill="#f8dc6c" stroke="#f8dc6c" stroke-width="0.38" text-anchor="middle">21.96</text><text x="54.75" y="103" font-size="13" fill="#eee" text-anchor="middle" textLength="85.45" lengthAdjust="spacingAndGlyphs">GRILL_A_CMD</text><circle cx="54.75" cy="53.40" r="6.7" fill="#363736"/><circle cx="54.75" cy="53.80" r="5.7" fill="#0c0c0c"/><circle cx="54.75" cy="53.60" r="4.4" fill="#1e1f1e"/><circle cx="54.75" cy="54.10" r="3.5" fill="#070707"/><polygon points="55.66,51.63 8.86,33.95 8.39,35.05 53.84,55.97" fill="#fafafa"/><circle cx="54.75" cy="53.80" r="2.35" fill="#fafafa"/></svg></div><div class="bx" style="left:125.60px;top:679.98px"><svg width="108.50" height="107.00" viewBox="0 0 108.50 107.00"><rect x="0" y="0" width="108.50" height="107.00" rx="10" fill="#030303"/><g clip-path="url(#gclip)"><rect x="1.7" y="1.7" width="105.10" height="103.60" fill="url(#gbg)"/><ellipse cx="54.25" cy="93.00" rx="83" ry="39" fill="#1a1b19" opacity="0.5"/><ellipse cx="54.25" cy="93.00" rx="82" ry="38" fill="url(#gbot)"/></g><line x1="3.55" y1="83.36" x2="11.25" y2="78.91" stroke="#f2f2f2" stroke-width="1.5"/><line x1="3.55" y1="72.84" x2="8.35" y2="71.06" stroke="#b4b4b4" stroke-width="1.0"/><line x1="3.55" y1="63.57" x2="8.35" y2="62.65" stroke="#b4b4b4" stroke-width="1.0"/><line x1="3.55" y1="54.87" x2="8.35" y2="54.77" stroke="#b4b4b4" stroke-width="1.0"/><line x1="3.55" y1="46.24" x2="8.35" y2="46.95" stroke="#b4b4b4" stroke-width="1.0"/><line x1="3.55" y1="37.16" x2="11.25" y2="39.67" stroke="#f2f2f2" stroke-width="1.5"/><line x1="3.55" y1="27.03" x2="8.35" y2="29.54" stroke="#b4b4b4" stroke-width="1.0"/><line x1="3.55" y1="14.94" x2="8.36" y2="18.59" stroke="#b4b4b4" stroke-width="1.0"/><line x1="8.57" y1="4.63" x2="13.45" y2="9.82" stroke="#b4b4b4" stroke-width="1.0"/><line x1="21.20" y1="3.30" x2="24.39" y2="8.10" stroke="#b4b4b4" stroke-width="1.0"/><line x1="32.27" y1="3.30" x2="35.69" y2="11.00" stroke="#f2f2f2" stroke-width="1.5"/><line x1="41.78" y1="3.30" x2="43.02" y2="8.10" stroke="#b4b4b4" stroke-width="1.0"/><line x1="50.51" y1="3.30" x2="50.91" y2="8.10" stroke="#b4b4b4" stroke-width="1.0"/><line x1="58.99" y1="3.30" x2="58.59" y2="8.10" stroke="#b4b4b4" stroke-width="1.0"/><line x1="67.72" y1="3.30" x2="66.48" y2="8.10" stroke="#b4b4b4" stroke-width="1.0"/><line x1="77.23" y1="3.30" x2="73.81" y2="11.00" stroke="#f2f2f2" stroke-width="1.5"/><line x1="88.30" y1="3.30" x2="85.11" y2="8.10" stroke="#b4b4b4" stroke-width="1.0"/><line x1="100.93" y1="4.63" x2="96.05" y2="9.82" stroke="#b4b4b4" stroke-width="1.0"/><line x1="105.95" y1="14.94" x2="101.14" y2="18.59" stroke="#b4b4b4" stroke-width="1.0"/><line x1="105.95" y1="27.03" x2="101.15" y2="29.54" stroke="#b4b4b4" stroke-width="1.0"/><line x1="105.95" y1="37.16" x2="98.25" y2="39.67" stroke="#f2f2f2" stroke-width="1.5"/><line x1="105.95" y1="46.24" x2="101.15" y2="46.95" stroke="#b4b4b4" stroke-width="1.0"/><line x1="105.95" y1="54.87" x2="101.15" y2="54.77" stroke="#b4b4b4" stroke-width="1.0"/><line x1="105.95" y1="63.57" x2="101.15" y2="62.65" stroke="#b4b4b4" stroke-width="1.0"/><line x1="105.95" y1="72.84" x2="101.15" y2="71.06" stroke="#b4b4b4" stroke-width="1.0"/><line x1="105.95" y1="83.36" x2="98.25" y2="78.91" stroke="#f2f2f2" stroke-width="1.5"/><text x="23.55" y="74.86" font-size="13" fill="#deded6" text-anchor="middle">0</text><text x="23.55" y="46.71" font-size="13" fill="#deded6" text-anchor="middle">20</text><text x="39.68" y="23.00" font-size="13" fill="#deded6" text-anchor="middle">40</text><text x="69.82" y="23.00" font-size="13" fill="#deded6" text-anchor="middle">60</text><text x="85.95" y="46.71" font-size="13" fill="#deded6" text-anchor="middle">80</text><text x="85.95" y="74.86" font-size="13" fill="#deded6" text-anchor="middle">100</text><g stroke="#e06cc4" stroke-width="1.25" fill="none"><circle cx="52.35" cy="32.80" r="1.85"/><circle cx="57.25" cy="37.90" r="1.85"/><path d="M57.15 30.70L52.55 39.90"/></g><text transform="translate(54.05 83.4) scale(1.08 1)" font-size="15" fill="#e06cc4" stroke="#e06cc4" stroke-width="0.38" text-anchor="middle">36.08</text><text x="54.75" y="103" font-size="13" fill="#eee" text-anchor="middle" textLength="18.50" lengthAdjust="spacingAndGlyphs">FLI</text><circle cx="54.75" cy="53.40" r="6.7" fill="#363736"/><circle cx="54.75" cy="53.80" r="5.7" fill="#0c0c0c"/><circle cx="54.75" cy="53.60" r="4.4" fill="#1e1f1e"/><circle cx="54.75" cy="54.10" r="3.5" fill="#070707"/><polygon points="56.71,52.51 27.72,11.73 26.72,12.39 52.79,55.09" fill="#fafafa"/><circle cx="54.75" cy="53.80" r="2.35" fill="#fafafa"/></svg></div><div class="bx" style="left:247.80px;top:679.98px"><svg width="108.50" height="107.00" viewBox="0 0 108.50 107.00"><rect x="0" y="0" width="108.50" height="107.00" rx="10" fill="#030303"/><g clip-path="url(#gclip)"><rect x="1.7" y="1.7" width="105.10" height="103.60" fill="url(#gbg)"/><ellipse cx="54.25" cy="93.00" rx="83" ry="39" fill="#1a1b19" opacity="0.5"/><ellipse cx="54.25" cy="93.00" rx="82" ry="38" fill="url(#gbot)"/></g><text x="54.25" y="24.9" font-size="15" fill="#74ecd0" stroke="#74ecd0" stroke-width="0.2" text-anchor="middle">km</text><text transform="translate(54.55 57.4) scale(1.05 1)" font-size="17" fill="#74ecd0" stroke="#74ecd0" stroke-width="0.6" text-anchor="middle">0.0</text><text x="54.25" y="103" font-size="13" fill="#eee" text-anchor="middle" textLength="57.64" lengthAdjust="spacingAndGlyphs">MIL_DIST</text></svg></div><div class="bx" style="left:370.00px;top:679.98px"><svg width="108.50" height="107.00" viewBox="0 0 108.50 107.00"><rect x="0" y="0" width="108.50" height="107.00" rx="10" fill="#030303"/><g clip-path="url(#gclip)"><rect x="1.7" y="1.7" width="105.10" height="103.60" fill="url(#gbg)"/><ellipse cx="54.25" cy="93.00" rx="83" ry="39" fill="#1a1b19" opacity="0.5"/><ellipse cx="54.25" cy="93.00" rx="82" ry="38" fill="url(#gbot)"/></g><text transform="translate(54.55 57.4) scale(1.05 1)" font-size="17" fill="#f8aa3c" stroke="#f8aa3c" stroke-width="0.6" text-anchor="middle">0</text><text x="54.25" y="103" font-size="13" fill="#eee" text-anchor="middle" textLength="78.95" lengthAdjust="spacingAndGlyphs">NOTCSDTDT</text></svg></div>
</div>
<div id="R">
<div id="hdr">
<svg style="position:absolute;left:0;top:0" width="485" height="57" viewBox="0 0 485 57">
<path d="M12 21L6 29L12 37" stroke="#9a9c9a" stroke-width="2.6" fill="none"/>
<path d="M32 17.8L46.3 17.8Q47.5 17.8 48.2 19L51 24.6" stroke="#35a630" stroke-width="1.2" fill="none"/>
<path d="M33.5 24.6L51 24.6L51.6 23.2L53.8 23.2L54.2 24.8L52 26L52 37.6L51.8 39.9L48.8 39.9L48.5 37.8L37 37.8L33.5 33Z" fill="#35a630"/>
<path d="M44.2 30.6L51.3 29.2L51.1 31.3L44.5 32.2Z" fill="#dcdedc"/>
<circle cx="23.8" cy="24.1" r="9.6" fill="#dcdedc"/>
<path d="M27.5 31L32.5 40.5" stroke="#dcdedc" stroke-width="6.5" stroke-linecap="round"/>
<circle cx="23.8" cy="24.1" r="7.6" stroke="#35a630" stroke-width="1.6" fill="none"/>
<path d="M28.3 31L32.6 40" stroke="#35a630" stroke-width="4" stroke-linecap="round"/>
<path d="M18.5 24.3L20.3 24.3L21.3 22.5L22.3 25.8L23.4 20L24.6 28L25.8 21.8L26.8 25.3L27.8 23.5L29.3 24" stroke="#35a630" stroke-width="1" fill="none"/>
<path d="M314.5 14.3V44.5M299.8 29.4H329.6" stroke="#202020" stroke-width="2"/>
<path d="M369.5 17.3H399V20.6H369.5Z" fill="#202020"/><rect x="378.5" y="14.6" width="12.5" height="4" rx="1.8" fill="#202020"/>
<path d="M372.5 22.5V41.5Q372.5 44.5 375.5 44.5H393.5Q396.5 44.5 396.5 41.5V22.5" stroke="#222" stroke-width="2" fill="none"/>
<path d="M378 24.5V40.5M381.5 24.5V40.5M385 24.5V40.5M388.5 24.5V40.5M392 24.5V40.5" stroke="#222" stroke-width="1.5"/>
<rect x="451.5" y="17.2" width="6" height="5.5" fill="#8c8e8c"/>
<rect x="451.5" y="26.8" width="6" height="5.5" fill="#8c8e8c"/>
<rect x="451.5" y="36.3" width="6" height="5.5" fill="#8c8e8c"/>
</svg>
<div class="ttl">PID profile</div>
</div>
<div id="sel"><div class="st"><span class="ln" style="transform:scaleX(1.016)">Selected PIDs in module:</span></div><div class="st pcm" style="left:260.3px"><span class="ln" style="transform:scaleX(1.025)">PCM</span></div></div>
<div class="row" style="top:117.50px"><div class="cb"><div class="cbi"><svg width="20" height="20" viewBox="0 0 20 20"><path d="M4.2 4.8L15.4 15.6M15.4 4.8L4.2 15.6" stroke="#a81616" stroke-width="1.5"/><circle cx="9.8" cy="10.2" r="1.7" fill="#dd1c1c"/></svg></div></div><div class="t1"><span class="ln" style="transform:scaleX(1.0000)">TOTDIST - Total Distance</span></div><svg class="chev" width="12" height="16" viewBox="0 0 12 16"><path d="M1.8 1.5L9.6 8L1.8 14.5" stroke="#f2f2f2" stroke-width="2.1" fill="none"/></svg><div class="drag"><i style="top:0"></i><i style="top:6.5px"></i><i style="top:13px"></i></div></div><div class="row" style="top:174.92px"><div class="cb"><div class="cbi"><svg width="20" height="20" viewBox="0 0 20 20"><path d="M4.2 4.8L15.4 15.6M15.4 4.8L4.2 15.6" stroke="#a81616" stroke-width="1.5"/><circle cx="9.8" cy="10.2" r="1.7" fill="#dd1c1c"/></svg></div></div><div class="t1"><span class="ln" style="transform:scaleX(0.9794)">VSS - Vehicle Speed</span></div><svg class="chev" width="12" height="16" viewBox="0 0 12 16"><path d="M1.8 1.5L9.6 8L1.8 14.5" stroke="#f2f2f2" stroke-width="2.1" fill="none"/></svg><div class="drag"><i style="top:0"></i><i style="top:6.5px"></i><i style="top:13px"></i></div></div><div class="row" style="top:232.34px"><div class="cb"><div class="cbi"><svg width="20" height="20" viewBox="0 0 20 20"><path d="M4.2 4.8L15.4 15.6M15.4 4.8L4.2 15.6" stroke="#a81616" stroke-width="1.5"/><circle cx="9.8" cy="10.2" r="1.7" fill="#dd1c1c"/></svg></div></div><div class="t1"><span class="ln" style="transform:scaleX(0.9940)">RUNTM - Time Since Engine Start</span></div><svg class="chev" width="12" height="16" viewBox="0 0 12 16"><path d="M1.8 1.5L9.6 8L1.8 14.5" stroke="#f2f2f2" stroke-width="2.1" fill="none"/></svg><div class="drag"><i style="top:0"></i><i style="top:6.5px"></i><i style="top:13px"></i></div></div><div class="row" style="top:289.76px"><div class="cb"><div class="cbi"><svg width="20" height="20" viewBox="0 0 20 20"><path d="M4.2 4.8L15.4 15.6M15.4 4.8L4.2 15.6" stroke="#a81616" stroke-width="1.5"/><circle cx="9.8" cy="10.2" r="1.7" fill="#dd1c1c"/></svg></div></div><div class="t2"><span class="ln" style="transform:scaleX(1.0016)">OUTTMP - External Temperature</span><br><span class="ln" style="transform:scaleX(1.0039)">From Sensor</span></div><svg class="chev" width="12" height="16" viewBox="0 0 12 16"><path d="M1.8 1.5L9.6 8L1.8 14.5" stroke="#f2f2f2" stroke-width="2.1" fill="none"/></svg><div class="drag"><i style="top:0"></i><i style="top:6.5px"></i><i style="top:13px"></i></div></div><div class="row" style="top:347.18px"><div class="cb"><div class="cbi"><svg width="20" height="20" viewBox="0 0 20 20"><path d="M4.2 4.8L15.4 15.6M15.4 4.8L4.2 15.6" stroke="#a81616" stroke-width="1.5"/><circle cx="9.8" cy="10.2" r="1.7" fill="#dd1c1c"/></svg></div></div><div class="t1"><span class="ln" style="transform:scaleX(1.0048)">ECT - Engine coolant temperature</span></div><svg class="chev" width="12" height="16" viewBox="0 0 12 16"><path d="M1.8 1.5L9.6 8L1.8 14.5" stroke="#f2f2f2" stroke-width="2.1" fill="none"/></svg><div class="drag"><i style="top:0"></i><i style="top:6.5px"></i><i style="top:13px"></i></div></div><div class="row" style="top:404.60px"><div class="cb"><div class="cbi"><svg width="20" height="20" viewBox="0 0 20 20"><path d="M4.2 4.8L15.4 15.6M15.4 4.8L4.2 15.6" stroke="#a81616" stroke-width="1.5"/><circle cx="9.8" cy="10.2" r="1.7" fill="#dd1c1c"/></svg></div></div><div class="t2"><span class="ln" style="transform:scaleX(0.9960)">RPM - Engine Revolutions Per</span><br><span class="ln" style="transform:scaleX(1.0288)">Minute</span></div><svg class="chev" width="12" height="16" viewBox="0 0 12 16"><path d="M1.8 1.5L9.6 8L1.8 14.5" stroke="#f2f2f2" stroke-width="2.1" fill="none"/></svg><div class="drag"><i style="top:0"></i><i style="top:6.5px"></i><i style="top:13px"></i></div></div><div class="row" style="top:462.02px"><div class="cb"><div class="cbi"><svg width="20" height="20" viewBox="0 0 20 20"><path d="M4.2 4.8L15.4 15.6M15.4 4.8L4.2 15.6" stroke="#a81616" stroke-width="1.5"/><circle cx="9.8" cy="10.2" r="1.7" fill="#dd1c1c"/></svg></div></div><div class="t1"><span class="ln" style="transform:scaleX(0.9900)">LOAD - Calculated Load Value</span></div><svg class="chev" width="12" height="16" viewBox="0 0 12 16"><path d="M1.8 1.5L9.6 8L1.8 14.5" stroke="#f2f2f2" stroke-width="2.1" fill="none"/></svg><div class="drag"><i style="top:0"></i><i style="top:6.5px"></i><i style="top:13px"></i></div></div><div class="row" style="top:519.44px"><div class="cb"><div class="cbi"><svg width="20" height="20" viewBox="0 0 20 20"><path d="M4.2 4.8L15.4 15.6M15.4 4.8L4.2 15.6" stroke="#a81616" stroke-width="1.5"/><circle cx="9.8" cy="10.2" r="1.7" fill="#dd1c1c"/></svg></div></div><div class="t2"><span class="ln" style="transform:scaleX(1.0102)">VNTP - Variable Nozzle Turbo</span><br><span class="ln" style="transform:scaleX(1.0385)">Position</span></div><svg class="chev" width="12" height="16" viewBox="0 0 12 16"><path d="M1.8 1.5L9.6 8L1.8 14.5" stroke="#f2f2f2" stroke-width="2.1" fill="none"/></svg><div class="drag"><i style="top:0"></i><i style="top:6.5px"></i><i style="top:13px"></i></div></div><div class="row" style="top:576.86px"><div class="cb"><div class="cbi"><svg width="20" height="20" viewBox="0 0 20 20"><path d="M4.2 4.8L15.4 15.6M15.4 4.8L4.2 15.6" stroke="#a81616" stroke-width="1.5"/><circle cx="9.8" cy="10.2" r="1.7" fill="#dd1c1c"/></svg></div></div><div class="t2"><span class="ln" style="transform:scaleX(0.9792)">MAINECUV - Main ECU voltage</span><br><span class="ln" style="transform:scaleX(1.0078)">supply</span></div><svg class="chev" width="12" height="16" viewBox="0 0 12 16"><path d="M1.8 1.5L9.6 8L1.8 14.5" stroke="#f2f2f2" stroke-width="2.1" fill="none"/></svg><div class="drag"><i style="top:0"></i><i style="top:6.5px"></i><i style="top:13px"></i></div></div><div class="row" style="top:634.28px"><div class="cb"><div class="cbi"><svg width="20" height="20" viewBox="0 0 20 20"><path d="M4.2 4.8L15.4 15.6M15.4 4.8L4.2 15.6" stroke="#a81616" stroke-width="1.5"/><circle cx="9.8" cy="10.2" r="1.7" fill="#dd1c1c"/></svg></div></div><div class="t2"><span class="ln" style="transform:scaleX(0.9962)">APP_D - Accelerator Pedal</span><br><span class="ln" style="transform:scaleX(1.0180)">Position D</span></div><svg class="chev" width="12" height="16" viewBox="0 0 12 16"><path d="M1.8 1.5L9.6 8L1.8 14.5" stroke="#f2f2f2" stroke-width="2.1" fill="none"/></svg><div class="drag"><i style="top:0"></i><i style="top:6.5px"></i><i style="top:13px"></i></div></div><div class="row" style="top:691.70px"><div class="cb"><div class="cbi"><svg width="20" height="20" viewBox="0 0 20 20"><path d="M4.2 4.8L15.4 15.6M15.4 4.8L4.2 15.6" stroke="#a81616" stroke-width="1.5"/><circle cx="9.8" cy="10.2" r="1.7" fill="#dd1c1c"/></svg></div></div><div class="t1"><span class="ln" style="transform:scaleX(0.9738)">FRP - Fuel Rail Pressure</span></div><svg class="chev" width="12" height="16" viewBox="0 0 12 16"><path d="M1.8 1.5L9.6 8L1.8 14.5" stroke="#f2f2f2" stroke-width="2.1" fill="none"/></svg><div class="drag"><i style="top:0"></i><i style="top:6.5px"></i><i style="top:13px"></i></div></div><div class="row" style="top:749.12px"><div class="cb"><div class="cbi"><svg width="20" height="20" viewBox="0 0 20 20"><path d="M4.2 4.8L15.4 15.6M15.4 4.8L4.2 15.6" stroke="#a81616" stroke-width="1.5"/><circle cx="9.8" cy="10.2" r="1.7" fill="#dd1c1c"/></svg></div></div><div class="t2"><span class="ln" style="transform:scaleX(1.0417)">MAP - Manifold Absolute</span><br><span class="ln" style="transform:scaleX(1.0106)">Pressure - High Resolution</span></div><svg class="chev" width="12" height="16" viewBox="0 0 12 16"><path d="M1.8 1.5L9.6 8L1.8 14.5" stroke="#f2f2f2" stroke-width="2.1" fill="none"/></svg><div class="drag"><i style="top:0"></i><i style="top:6.5px"></i><i style="top:13px"></i></div></div><div class="row" style="top:806.54px"><div class="cb"><div class="cbi"><svg width="20" height="20" viewBox="0 0 20 20"><path d="M4.2 4.8L15.4 15.6M15.4 4.8L4.2 15.6" stroke="#a81616" stroke-width="1.5"/><circle cx="9.8" cy="10.2" r="1.7" fill="#dd1c1c"/></svg></div></div><div class="t2"><span class="ln" style="transform:scaleX(0.9718)">VAPORIZER_MES - Vaporiser Glow</span><br><span class="ln" style="transform:scaleX(0.9822)">Plug Relay State - Feedback</span></div><svg class="chev" width="12" height="16" viewBox="0 0 12 16"><path d="M1.8 1.5L9.6 8L1.8 14.5" stroke="#f2f2f2" stroke-width="2.1" fill="none"/></svg><div class="drag"><i style="top:0"></i><i style="top:6.5px"></i><i style="top:13px"></i></div></div><div class="row" style="top:863.96px"><div class="cb"><div class="cbi"><svg width="20" height="20" viewBox="0 0 20 20"><path d="M4.2 4.8L15.4 15.6M15.4 4.8L4.2 15.6" stroke="#a81616" stroke-width="1.5"/><circle cx="9.8" cy="10.2" r="1.7" fill="#dd1c1c"/></svg></div></div><div class="t2"><span class="ln" style="transform:scaleX(0.9548)">DPF_LOAD - DPF System</span><br><span class="ln" style="transform:scaleX(1.0337)">Percentage of the Maximum Soot</span></div><svg class="chev" width="12" height="16" viewBox="0 0 12 16"><path d="M1.8 1.5L9.6 8L1.8 14.5" stroke="#f2f2f2" stroke-width="2.1" fill="none"/></svg><div class="drag"><i style="top:0"></i><i style="top:6.5px"></i><i style="top:13px"></i></div></div><div class="row" style="top:921.38px"><div class="cb"><div class="cbi"><svg width="20" height="20" viewBox="0 0 20 20"><path d="M4.2 4.8L15.4 15.6M15.4 4.8L4.2 15.6" stroke="#a81616" stroke-width="1.5"/><circle cx="9.8" cy="10.2" r="1.7" fill="#dd1c1c"/></svg></div></div><div class="t2"><span class="ln" style="transform:scaleX(0.9470)">DPF_SOOT_LD - DPF System</span><br><span class="ln" style="transform:scaleX(1.0337)">Percentage of the Maximum Soot</span></div><svg class="chev" width="12" height="16" viewBox="0 0 12 16"><path d="M1.8 1.5L9.6 8L1.8 14.5" stroke="#f2f2f2" stroke-width="2.1" fill="none"/></svg><div class="drag"><i style="top:0"></i><i style="top:6.5px"></i><i style="top:13px"></i></div></div><div class="row" style="top:978.80px"><div class="cb"><div class="cbi"><svg width="20" height="20" viewBox="0 0 20 20"><path d="M4.2 4.8L15.4 15.6M15.4 4.8L4.2 15.6" stroke="#a81616" stroke-width="1.5"/><circle cx="9.8" cy="10.2" r="1.7" fill="#dd1c1c"/></svg></div></div><div class="t2"><span class="ln" style="transform:scaleX(0.975)">DP_DPF - Differential pressure ac</span><br><span class="ln" style="transform:scaleX(0.975)">ross DPF</span></div><svg class="chev" width="12" height="16" viewBox="0 0 12 16"><path d="M1.8 1.5L9.6 8L1.8 14.5" stroke="#f2f2f2" stroke-width="2.1" fill="none"/></svg><div class="drag"><i style="top:0"></i><i style="top:6.5px"></i><i style="top:13px"></i></div></div>
<div id="scr"></div>
</div>
</body></html>
